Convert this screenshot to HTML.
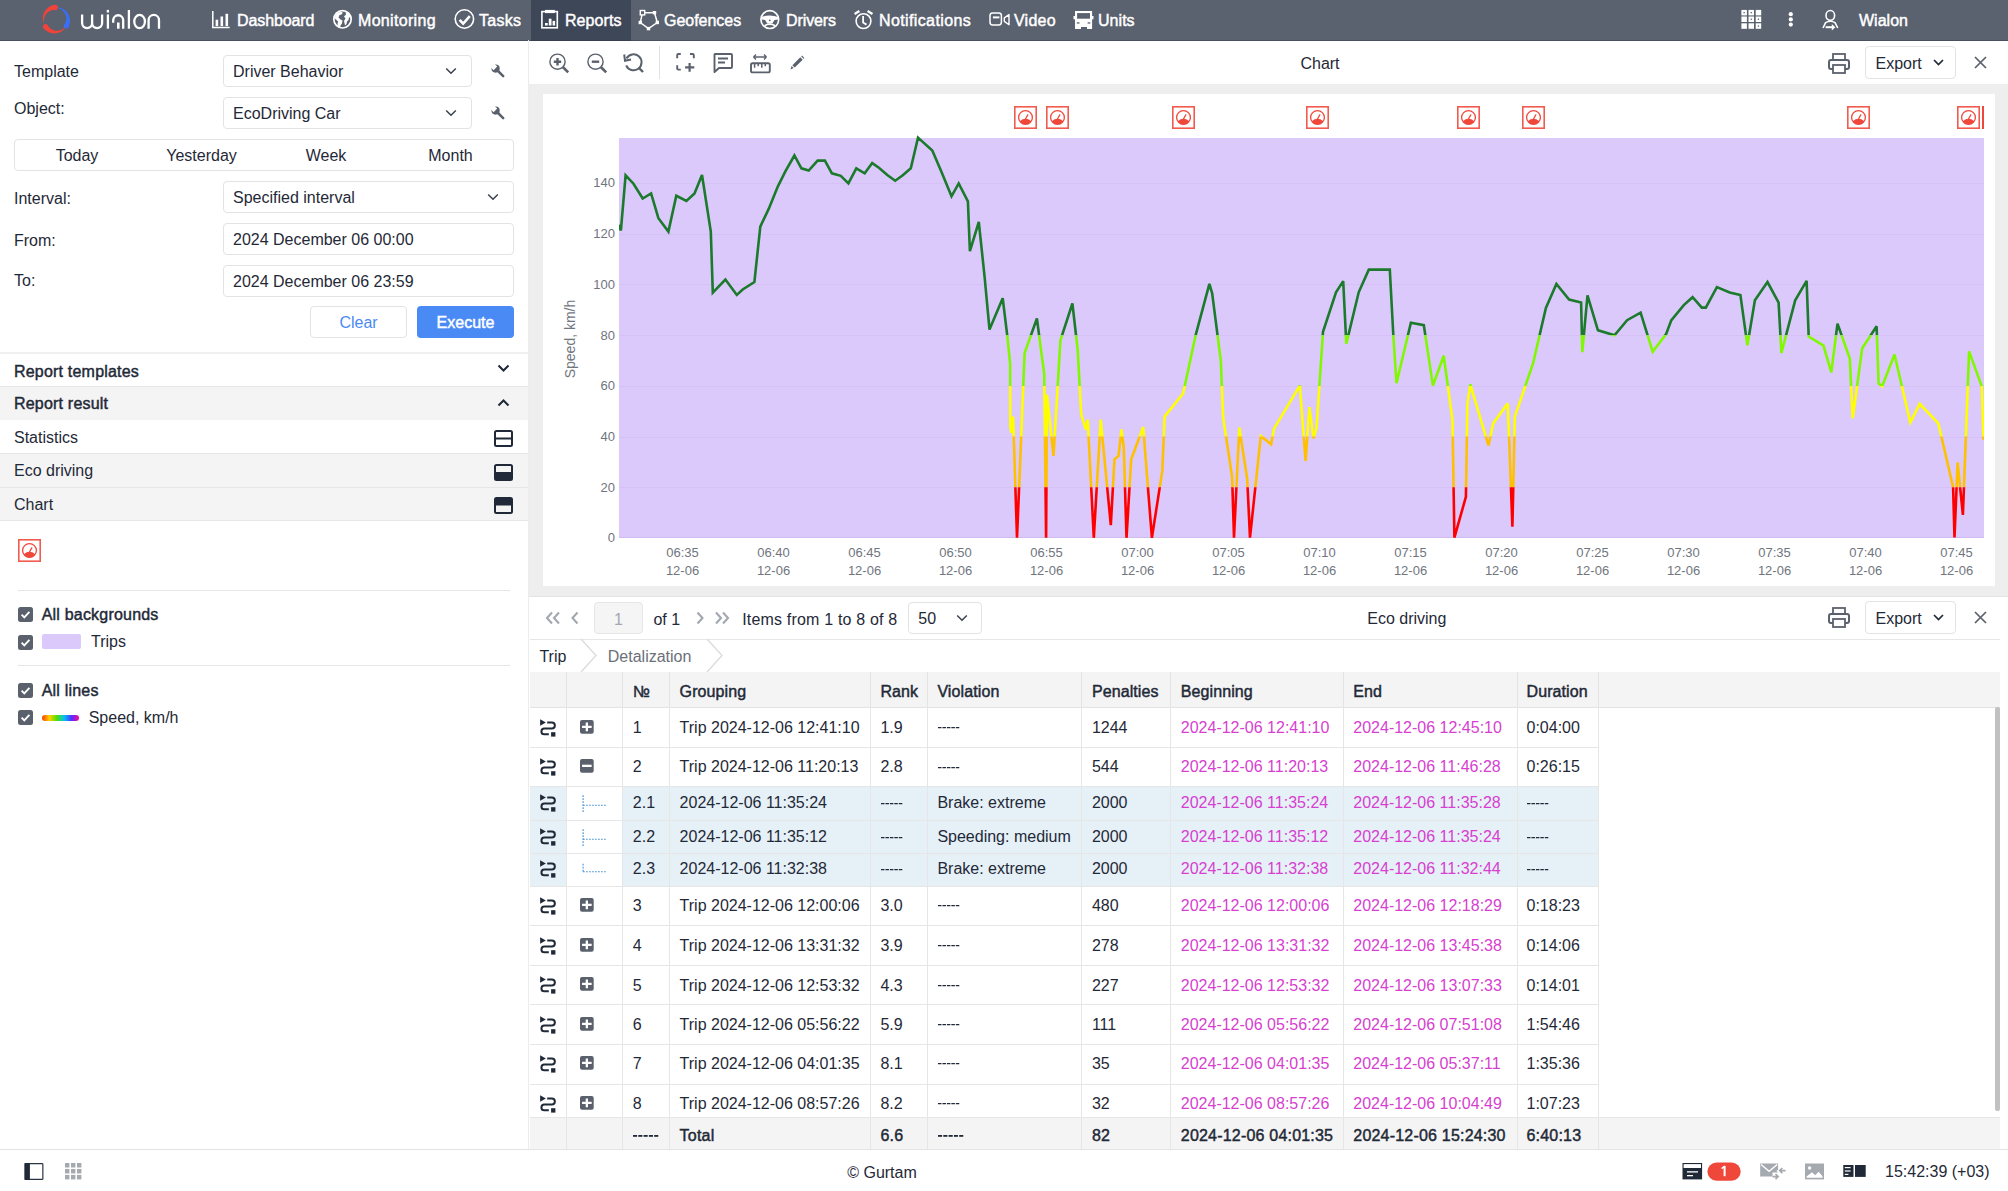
<!DOCTYPE html>
<html><head><meta charset="utf-8"><title>Wialon Reports</title>
<style>
html,body{margin:0;padding:0;}
body{width:2008px;height:1191px;position:relative;overflow:hidden;background:#fff;font-family:"Liberation Sans",sans-serif;}
.t{position:absolute;white-space:nowrap;}
.r{position:absolute;box-sizing:border-box;}
svg.r{overflow:visible;}
</style></head><body>

<div class="r" style="left:0px;top:0px;width:2008px;height:41px;background:#5a616f;"></div>
<div class="r" style="left:531px;top:0px;width:100px;height:41px;background:#3e4758;"></div>
<div class="r" style="left:0px;top:40px;width:2008px;height:1px;background:rgba(40,48,62,0.35);"></div>
<svg class="r" style="left:40px;top:4px;" width="32" height="32" viewBox="0 0 32 32"><path d="M15.18 0.81 L14.54 0.90 L13.90 1.03 L13.27 1.18 L12.65 1.36 L12.04 1.56 L11.45 1.79 L10.86 2.04 L10.29 2.32 L9.74 2.62 L9.20 2.95 L8.68 3.29 L8.18 3.66 L7.69 4.05 L7.23 4.46 L6.78 4.88 L6.36 5.33 L5.96 5.78 L5.58 6.26 L5.22 6.75 L4.88 7.25 L4.57 7.76 L4.29 8.29 L4.03 8.82 L3.79 9.37 L3.58 9.92 L3.39 10.47 L3.23 11.04 L3.09 11.60 L2.98 12.17 L2.90 12.74 L2.84 13.32 L2.81 13.89 L2.80 14.46 L2.82 15.02 L2.86 15.59 L2.92 16.15 L3.01 16.70 L3.13 17.24 L3.26 17.78 L3.42 18.31 L3.91 18.21 L3.87 17.68 L3.86 17.15 L3.86 16.63 L3.89 16.11 L3.94 15.60 L4.02 15.09 L4.11 14.58 L4.23 14.09 L4.37 13.60 L4.53 13.12 L4.71 12.65 L4.91 12.19 L5.13 11.75 L5.37 11.31 L5.62 10.89 L5.89 10.48 L6.18 10.09 L6.48 9.71 L6.80 9.35 L7.13 9.00 L7.48 8.68 L7.83 8.36 L8.20 8.07 L8.58 7.79 L8.97 7.54 L9.37 7.30 L9.77 7.08 L10.19 6.88 L10.61 6.70 L11.03 6.53 L11.46 6.39 L11.89 6.27 L12.32 6.17 L12.76 6.09 L13.20 6.02 L13.63 5.98 L14.07 5.96 L14.50 5.96 L14.93 5.97 L15.36 6.01Z" fill="#f0443a"/><circle cx="15.27" cy="3.41" r="2.60" fill="#f0443a"/><path d="M3.35 24.03 L3.79 24.56 L4.26 25.06 L4.75 25.54 L5.26 26.00 L5.79 26.43 L6.33 26.83 L6.89 27.20 L7.46 27.55 L8.05 27.87 L8.65 28.16 L9.26 28.42 L9.88 28.65 L10.51 28.85 L11.14 29.02 L11.78 29.16 L12.42 29.27 L13.06 29.35 L13.70 29.40 L14.34 29.42 L14.98 29.41 L15.62 29.37 L16.25 29.30 L16.87 29.20 L17.48 29.07 L18.09 28.92 L18.69 28.73 L19.27 28.53 L19.84 28.29 L20.40 28.03 L20.94 27.75 L21.46 27.44 L21.97 27.11 L22.46 26.76 L22.93 26.38 L23.38 25.99 L23.82 25.58 L24.22 25.15 L24.61 24.70 L24.97 24.24 L25.31 23.77 L24.93 23.45 L24.52 23.82 L24.09 24.18 L23.65 24.52 L23.20 24.83 L22.73 25.12 L22.26 25.39 L21.77 25.63 L21.28 25.85 L20.78 26.04 L20.27 26.21 L19.76 26.36 L19.24 26.48 L18.73 26.57 L18.21 26.64 L17.69 26.69 L17.17 26.71 L16.65 26.71 L16.14 26.68 L15.63 26.63 L15.13 26.56 L14.64 26.46 L14.15 26.34 L13.67 26.20 L13.20 26.04 L12.74 25.86 L12.29 25.66 L11.86 25.43 L11.43 25.19 L11.03 24.93 L10.63 24.65 L10.26 24.36 L9.90 24.05 L9.55 23.73 L9.22 23.39 L8.92 23.04 L8.63 22.68 L8.35 22.30 L8.10 21.92 L7.87 21.53 L7.66 21.12Z" fill="#f0443a"/><circle cx="5.50" cy="22.58" r="2.60" fill="#f0443a"/><path d="M28.39 23.32 L28.69 22.67 L28.96 22.01 L29.20 21.34 L29.40 20.66 L29.58 19.98 L29.71 19.28 L29.81 18.59 L29.88 17.90 L29.91 17.20 L29.91 16.51 L29.88 15.82 L29.81 15.13 L29.71 14.46 L29.58 13.79 L29.42 13.13 L29.22 12.48 L29.00 11.84 L28.74 11.22 L28.46 10.62 L28.14 10.03 L27.80 9.46 L27.44 8.91 L27.05 8.38 L26.64 7.87 L26.20 7.39 L25.74 6.92 L25.27 6.49 L24.77 6.08 L24.26 5.69 L23.73 5.33 L23.18 5.00 L22.63 4.70 L22.06 4.43 L21.48 4.18 L20.89 3.97 L20.30 3.78 L19.70 3.63 L19.09 3.50 L18.49 3.41 L17.88 3.34 L17.79 3.83 L18.35 4.00 L18.90 4.20 L19.44 4.42 L19.96 4.67 L20.46 4.94 L20.95 5.23 L21.43 5.55 L21.88 5.88 L22.32 6.24 L22.73 6.62 L23.13 7.01 L23.50 7.42 L23.85 7.85 L24.18 8.29 L24.49 8.74 L24.77 9.21 L25.02 9.69 L25.25 10.17 L25.46 10.67 L25.64 11.17 L25.80 11.68 L25.93 12.19 L26.03 12.70 L26.11 13.22 L26.16 13.74 L26.19 14.25 L26.19 14.77 L26.17 15.28 L26.12 15.79 L26.05 16.29 L25.95 16.78 L25.83 17.27 L25.69 17.75 L25.52 18.21 L25.33 18.67 L25.13 19.11 L24.90 19.54 L24.65 19.96 L24.38 20.36 L24.10 20.75Z" fill="#3a6ff5"/><circle cx="26.24" cy="22.03" r="2.50" fill="#3a6ff5"/></svg>
<svg class="r" style="left:80px;top:10.2px;" width="82" height="20" viewBox="0 0 82 20"><g fill="none" stroke="#ffffff" stroke-width="2.3"><path d="M2.1 4.4 V13.1 A5 5 0 0 0 12.1 13.1 V4.4 M12.1 13.1 A5 5 0 0 0 22.1 13.1 V4.4"/><path d="M27.9 4.4 V18.7"/><path d="M33.2 12.8 V10.25 A5 5 0 0 1 43.2 10.25 V18.7"/><path d="M48.9 0 V18.7"/><ellipse cx="59.6" cy="11.55" rx="5.35" ry="6.6"/><path d="M68.6 18.7 V10.15 A5.2 5.2 0 0 1 79 10.15 V18.7"/></g><rect x="26.75" y="-0.1" width="2.3" height="2.6" fill="#ffffff"/><rect x="37" y="12.5" width="2.6" height="6.2" fill="#ffffff"/></svg>
<svg class="r" style="left:0px;top:0px;" width="2008" height="41" viewBox="0 0 2008 41"><g fill="none" stroke="#ffffff"><path d="M212.8 11 V27.6 H229.7" stroke-width="1.5"/></g><rect x="215.6" y="19.7" width="2.6" height="6.4" fill="#ffffff"/><rect x="220.5" y="16.5" width="2.6" height="9.6" fill="#ffffff"/><rect x="225.5" y="13.8" width="2.6" height="12.3" fill="#ffffff"/><circle cx="342.5" cy="19.3" r="8.7" fill="none" stroke="#ffffff" stroke-width="1.7"/><path d="M337.5 12.8 Q340.5 11.5 343 12.5 L341.5 14.5 L339.5 15 L338.5 17.5 L340.5 19.5 L342.5 20.5 L342 23.5 L340.5 25.5 L340 27.5 Q337.5 26.5 337.5 24.5 L338 21.5 L336 19.5 L334.5 18.5 Q335 14.5 337.5 12.8 Z" fill="#ffffff"/><path d="M345.5 11.8 Q349.5 13 350.8 17 L349 17.5 L348.5 20 L347 21.5 L346.5 24 L345 25.5 Q344.5 22.5 344 21 L345.5 18.5 L344 16.5 L346 14.5 Z" fill="#ffffff"/><circle cx="464.4" cy="19" r="9.2" fill="none" stroke="#ffffff" stroke-width="1.6"/><path d="M459.6 19.8 L463.2 23.6 L469.8 16.2" fill="none" stroke="#ffffff" stroke-width="2.6"/><rect x="541.9" y="11.6" width="15.4" height="16.2" fill="none" stroke="#ffffff" stroke-width="1.6"/><rect x="545" y="9.9" width="9.8" height="3.2" fill="#ffffff"/><rect x="545" y="23" width="2.7" height="2.5" fill="#ffffff"/><rect x="548.8" y="18.7" width="2.7" height="6.8" fill="#ffffff"/><rect x="552.6" y="20.9" width="2.5" height="4.6" fill="#ffffff"/><path d="M642.5 12.7 L654.5 12.7 L657.3 22.5 L648.5 28.6 L640.3 22.5 Z" fill="none" stroke="#ffffff" stroke-width="1.5"/><rect x="640.3" y="10.5" width="4.4" height="4.4" fill="#5a616f" stroke="#ffffff" stroke-width="1.4"/><rect x="652.8" y="11" width="3.4" height="3.4" fill="#ffffff"/><rect x="655.6" y="20.8" width="3.4" height="3.4" fill="#ffffff"/><rect x="646.8" y="26.9" width="3.4" height="3.4" fill="#ffffff"/><rect x="638.6" y="20.8" width="3.4" height="3.4" fill="#ffffff"/><circle cx="769.8" cy="19.6" r="8.9" fill="none" stroke="#ffffff" stroke-width="1.7"/><path d="M761.2 17 Q769.8 14 778.4 17 L778.4 19.5 L774.5 20 L772.3 23.5 L767.3 23.5 L765.1 20 L761.2 19.5 Z" fill="#ffffff"/><circle cx="769.8" cy="20.3" r="0.9" fill="#5a616f"/><path d="M764.5 25.8 Q769.8 22.6 775.1 25.8" fill="none" stroke="#ffffff" stroke-width="1.7"/><circle cx="863.5" cy="21.1" r="7.4" fill="none" stroke="#ffffff" stroke-width="1.6"/><path d="M854.6 14 L859.4 11 M867.6 11 L872.5 14" fill="none" stroke="#ffffff" stroke-width="2.2"/><path d="M863.1 16 V22.6 L866.5 24.6" fill="none" stroke="#ffffff" stroke-width="1.8"/><rect x="990" y="12.9" width="11.4" height="12" rx="2.6" fill="none" stroke="#ffffff" stroke-width="1.5"/><rect x="992.9" y="16.4" width="6.5" height="2" fill="#ffffff"/><path d="M1004.3 17.8 L1009 14.6 V24.7 L1004.3 21.4 Z" fill="none" stroke="#ffffff" stroke-width="1.4" stroke-linejoin="round"/><path d="M1075 11 H1092.1 V28.9 H1087 V27.1 H1081 V28.9 H1075 Z" fill="#ffffff"/><rect x="1077.1" y="13.1" width="12.9" height="5.6" fill="#5a616f"/><rect x="1073.5" y="16" width="1.6" height="3.3" fill="#ffffff"/><rect x="1092" y="16" width="1.5" height="3.3" fill="#ffffff"/><rect x="1076.8" y="22.3" width="2.7" height="1.3" fill="#5a616f"/><rect x="1087.6" y="22.3" width="2.7" height="1.3" fill="#5a616f"/><rect x="1741.4" y="9.9" width="5.5" height="5.5" fill="#ffffff"/><rect x="1743.5" y="12.0" width="1.3" height="1.3" fill="#5a616f"/><rect x="1741.4" y="16.5" width="5.5" height="5.5" fill="#ffffff"/><rect x="1741.4" y="23.3" width="5.5" height="5.5" fill="#ffffff"/><rect x="1748.5" y="9.9" width="5.5" height="5.5" fill="#ffffff"/><rect x="1750.6" y="12.0" width="1.3" height="1.3" fill="#5a616f"/><rect x="1748.5" y="16.5" width="5.5" height="5.5" fill="#ffffff"/><rect x="1750.6" y="18.6" width="1.3" height="1.3" fill="#5a616f"/><rect x="1748.5" y="23.3" width="5.5" height="5.5" fill="#ffffff"/><rect x="1755.7" y="9.9" width="5.5" height="5.5" fill="#ffffff"/><rect x="1755.7" y="16.5" width="5.5" height="5.5" fill="#ffffff"/><rect x="1757.8" y="18.6" width="1.3" height="1.3" fill="#5a616f"/><rect x="1755.7" y="23.3" width="5.5" height="5.5" fill="#ffffff"/><rect x="1757.8" y="25.400000000000002" width="1.3" height="1.3" fill="#5a616f"/><circle cx="1790.8" cy="14.2" r="2.1" fill="#ffffff"/><circle cx="1790.8" cy="19.4" r="2.1" fill="#ffffff"/><circle cx="1790.8" cy="24.6" r="2.1" fill="#ffffff"/><ellipse cx="1830.3" cy="15.4" rx="4.3" ry="4.9" fill="none" stroke="#ffffff" stroke-width="1.6"/><path d="M1823 28 L1825.6 22.6 Q1830.3 19.8 1835 22.6 L1837.8 28" fill="none" stroke="#ffffff" stroke-width="1.6"/><path d="M1825.6 27.2 H1832.5" stroke="#ffffff" stroke-width="2"/><path d="M1831.8 23.9 L1835.4 27.2 L1831.8 30.5 Z" fill="#ffffff"/></svg>
<div class="t" style="top:11.0px;font-size:16px;line-height:20px;color:#ffffff;left:237.0px;-webkit-text-stroke:0.45px #fff;letter-spacing:-0.1px;">Dashboard</div>
<div class="t" style="top:11.0px;font-size:16px;line-height:20px;color:#ffffff;left:358.0px;-webkit-text-stroke:0.45px #fff;letter-spacing:0.32px;">Monitoring</div>
<div class="t" style="top:11.0px;font-size:16px;line-height:20px;color:#ffffff;left:479.0px;-webkit-text-stroke:0.45px #fff;letter-spacing:0.3px;">Tasks</div>
<div class="t" style="top:11.0px;font-size:16px;line-height:20px;color:#ffffff;left:565.0px;-webkit-text-stroke:0.45px #fff;letter-spacing:0.07px;">Reports</div>
<div class="t" style="top:11.0px;font-size:16px;line-height:20px;color:#ffffff;left:664.0px;-webkit-text-stroke:0.45px #fff;letter-spacing:-0.02px;">Geofences</div>
<div class="t" style="top:11.0px;font-size:16px;line-height:20px;color:#ffffff;left:786.0px;-webkit-text-stroke:0.45px #fff;letter-spacing:-0.1px;">Drivers</div>
<div class="t" style="top:11.0px;font-size:16px;line-height:20px;color:#ffffff;left:879.0px;-webkit-text-stroke:0.45px #fff;letter-spacing:0.38px;">Notifications</div>
<div class="t" style="top:11.0px;font-size:16px;line-height:20px;color:#ffffff;left:1014.0px;-webkit-text-stroke:0.45px #fff;letter-spacing:0.24px;">Video</div>
<div class="t" style="top:11.0px;font-size:16px;line-height:20px;color:#ffffff;left:1098.0px;-webkit-text-stroke:0.45px #fff;letter-spacing:0.04px;">Units</div>
<div class="t" style="top:11.0px;font-size:16px;line-height:20px;color:#ffffff;left:1859.0px;-webkit-text-stroke:0.45px #fff;letter-spacing:0.02px;">Wialon</div>
<div class="r" style="left:528px;top:40px;width:1.3px;height:1110px;background:#ececec;"></div>
<div class="t" style="top:62.3px;font-size:16px;line-height:20px;color:#1f2937;left:14.0px;">Template</div>
<div class="r" style="left:223px;top:55px;width:249px;height:32px;border:1px solid #e3e3e3;border-radius:4px;background:#fff;"></div>
<div class="t" style="top:62.0px;font-size:16px;line-height:20px;color:#1f2937;left:233.0px;">Driver Behavior</div>
<svg class="r" style="left:445px;top:67.0px;" width="12" height="8" viewBox="0 0 12 8"><path d="M1.2 1.5 L6 6.2 L10.8 1.5" fill="none" stroke="#39414e" stroke-width="1.5"/></svg>
<div class="t" style="top:99.2px;font-size:16px;line-height:20px;color:#1f2937;left:14.0px;">Object:</div>
<div class="r" style="left:223px;top:97px;width:249px;height:32px;border:1px solid #e3e3e3;border-radius:4px;background:#fff;"></div>
<div class="t" style="top:104.0px;font-size:16px;line-height:20px;color:#1f2937;left:233.0px;">EcoDriving Car</div>
<svg class="r" style="left:445px;top:109.0px;" width="12" height="8" viewBox="0 0 12 8"><path d="M1.2 1.5 L6 6.2 L10.8 1.5" fill="none" stroke="#39414e" stroke-width="1.5"/></svg>
<svg class="r" style="left:490.5px;top:64px;" width="15" height="15" viewBox="0 0 15 15"><path d="M5 5 L12.2 12.2" stroke="#5b616c" stroke-width="2.5" stroke-linecap="round"/><circle cx="4.6" cy="4.6" r="4.1" fill="#5b616c"/><path d="M-1 2.6 L2.6 -1 L6.2 2.6 L2.6 6.2 Z" fill="#fff"/></svg>
<svg class="r" style="left:490.5px;top:106px;" width="15" height="15" viewBox="0 0 15 15"><path d="M5 5 L12.2 12.2" stroke="#5b616c" stroke-width="2.5" stroke-linecap="round"/><circle cx="4.6" cy="4.6" r="4.1" fill="#5b616c"/><path d="M-1 2.6 L2.6 -1 L6.2 2.6 L2.6 6.2 Z" fill="#fff"/></svg>
<div class="r" style="left:14px;top:139px;width:500px;height:32px;border:1px solid #e3e3e3;border-radius:4px;"></div>
<div class="t" style="top:146.2px;font-size:16px;line-height:20px;color:#1f2937;left:-223.0px;width:600px;text-align:center;">Today</div>
<div class="t" style="top:146.2px;font-size:16px;line-height:20px;color:#1f2937;left:-98.5px;width:600px;text-align:center;">Yesterday</div>
<div class="t" style="top:146.2px;font-size:16px;line-height:20px;color:#1f2937;left:26.0px;width:600px;text-align:center;">Week</div>
<div class="t" style="top:146.2px;font-size:16px;line-height:20px;color:#1f2937;left:150.5px;width:600px;text-align:center;">Month</div>
<div class="t" style="top:188.5px;font-size:16px;line-height:20px;color:#1f2937;left:14.0px;">Interval:</div>
<div class="r" style="left:223px;top:181px;width:291px;height:32px;border:1px solid #e3e3e3;border-radius:4px;background:#fff;"></div>
<div class="t" style="top:188.0px;font-size:16px;line-height:20px;color:#1f2937;left:233.0px;">Specified interval</div>
<svg class="r" style="left:487px;top:193.0px;" width="12" height="8" viewBox="0 0 12 8"><path d="M1.2 1.5 L6 6.2 L10.8 1.5" fill="none" stroke="#39414e" stroke-width="1.5"/></svg>
<div class="t" style="top:230.6px;font-size:16px;line-height:20px;color:#1f2937;left:14.0px;">From:</div>
<div class="r" style="left:223px;top:223px;width:291px;height:32px;border:1px solid #e3e3e3;border-radius:4px;background:#fff;"></div>
<div class="t" style="top:230.0px;font-size:16px;line-height:20px;color:#1f2937;left:233.0px;">2024 December 06 00:00</div>
<div class="t" style="top:270.8px;font-size:16px;line-height:20px;color:#1f2937;left:14.0px;">To:</div>
<div class="r" style="left:223px;top:265px;width:291px;height:32px;border:1px solid #e3e3e3;border-radius:4px;background:#fff;"></div>
<div class="t" style="top:272.0px;font-size:16px;line-height:20px;color:#1f2937;left:233.0px;">2024 December 06 23:59</div>
<div class="r" style="left:310px;top:306px;width:97px;height:32px;border:1px solid #e3e3e3;border-radius:4px;"></div>
<div class="t" style="top:313.3px;font-size:16px;line-height:20px;color:#4a8af4;left:58.5px;width:600px;text-align:center;">Clear</div>
<div class="r" style="left:417px;top:306px;width:97px;height:32px;background:#4a8af4;border-radius:4px;"></div>
<div class="t" style="top:313.3px;font-size:16px;line-height:20px;color:#fff;left:165.5px;width:600px;text-align:center;-webkit-text-stroke:0.45px #fff;">Execute</div>
<div class="r" style="left:0px;top:352px;width:528px;height:2px;background:#f0f0f0;"></div>
<div class="t" style="top:361.6px;font-size:16px;line-height:20px;color:#1f2937;left:14.0px;-webkit-text-stroke:0.45px #1f2937;letter-spacing:0.2px;">Report templates</div>
<svg class="r" style="left:497px;top:364px;" width="13" height="8" viewBox="0 0 13 8"><path d="M1.5 1.5 L6.5 6.5 L11.5 1.5" fill="none" stroke="#1f2937" stroke-width="2"/></svg>
<div class="r" style="left:0px;top:386px;width:528px;height:1px;background:#e6e6e6;"></div>
<div class="r" style="left:0px;top:387px;width:528px;height:33px;background:#f4f4f4;"></div>
<div class="t" style="top:394.1px;font-size:16px;line-height:20px;color:#1f2937;left:14.0px;-webkit-text-stroke:0.45px #1f2937;letter-spacing:0.2px;">Report result</div>
<svg class="r" style="left:497px;top:399px;" width="13" height="8" viewBox="0 0 13 8"><path d="M1.5 6.5 L6.5 1.5 L11.5 6.5" fill="none" stroke="#1f2937" stroke-width="2"/></svg>
<div class="t" style="top:428.4px;font-size:16px;line-height:20px;color:#1f2937;left:14.0px;">Statistics</div>
<div class="r" style="left:0px;top:453px;width:528px;height:1px;background:#e6e6e6;"></div>
<div class="r" style="left:0px;top:454px;width:528px;height:33px;background:#f4f4f4;"></div>
<div class="t" style="top:461.0px;font-size:16px;line-height:20px;color:#1f2937;left:14.0px;">Eco driving</div>
<div class="r" style="left:0px;top:487px;width:528px;height:1px;background:#e6e6e6;"></div>
<div class="r" style="left:0px;top:488px;width:528px;height:32px;background:#f4f4f4;"></div>
<div class="t" style="top:495.0px;font-size:16px;line-height:20px;color:#1f2937;left:14.0px;">Chart</div>
<div class="r" style="left:0px;top:520px;width:528px;height:1px;background:#e6e6e6;"></div>
<svg class="r" style="left:494px;top:430px;" width="19" height="17" viewBox="0 0 19 17"><rect x="1" y="1" width="17" height="15" rx="1.5" fill="none" stroke="#1f2937" stroke-width="2"/><path d="M1 8.5 H18" stroke="#1f2937" stroke-width="2"/></svg>
<svg class="r" style="left:494px;top:464px;" width="19" height="17" viewBox="0 0 19 17"><rect x="1" y="1" width="17" height="15" rx="1.5" fill="none" stroke="#1f2937" stroke-width="2"/><rect x="1" y="8" width="17" height="8" fill="#1f2937"/></svg>
<svg class="r" style="left:494px;top:497px;" width="19" height="17" viewBox="0 0 19 17"><rect x="1" y="1" width="17" height="15" rx="1.5" fill="none" stroke="#1f2937" stroke-width="2"/><rect x="1" y="1" width="17" height="7.5" fill="#1f2937"/></svg>
<svg class="r" style="left:18px;top:539px;" width="23" height="23" viewBox="0 0 23 23"><rect x="0.8" y="0.8" width="21.4" height="21.4" fill="#fff" stroke="#f25a4e" stroke-width="1.6"/><circle cx="11.5" cy="11.5" r="6.9" fill="none" stroke="#f0473b" stroke-width="1.3"/><path d="M5.7 15.2 Q11.5 10.3 17.3 15.2 A6.9 6.9 0 0 1 5.7 15.2 Z" fill="#f0473b"/><path d="M11.5 13.0 L13.8 8.9" stroke="#f0473b" stroke-width="1.3" stroke-linecap="round"/></svg>
<div class="r" style="left:18px;top:589.5px;width:492px;height:1.2px;background:#e6e6e6;"></div>
<svg class="r" style="left:18px;top:607px;" width="15" height="15" viewBox="0 0 15 15"><rect x="0" y="0" width="15" height="15" rx="2.5" fill="#5b616c"/><path d="M3.6 7.6 L6.3 10.3 L11.4 4.8" fill="none" stroke="#fff" stroke-width="1.9"/></svg>
<div class="t" style="top:605.3px;font-size:16px;line-height:20px;color:#1f2937;left:41.7px;-webkit-text-stroke:0.45px #1f2937;letter-spacing:0.2px;">All backgrounds</div>
<svg class="r" style="left:18px;top:635px;" width="15" height="15" viewBox="0 0 15 15"><rect x="0" y="0" width="15" height="15" rx="2.5" fill="#5b616c"/><path d="M3.6 7.6 L6.3 10.3 L11.4 4.8" fill="none" stroke="#fff" stroke-width="1.9"/></svg>
<div class="r" style="left:42px;top:634px;width:39px;height:15px;background:#dcc9fc;border-radius:2px;"></div>
<div class="t" style="top:632.2px;font-size:16px;line-height:20px;color:#1f2937;left:91.0px;">Trips</div>
<div class="r" style="left:18px;top:665px;width:492px;height:1.2px;background:#e6e6e6;"></div>
<svg class="r" style="left:18px;top:683px;" width="15" height="15" viewBox="0 0 15 15"><rect x="0" y="0" width="15" height="15" rx="2.5" fill="#5b616c"/><path d="M3.6 7.6 L6.3 10.3 L11.4 4.8" fill="none" stroke="#fff" stroke-width="1.9"/></svg>
<div class="t" style="top:681.2px;font-size:16px;line-height:20px;color:#1f2937;left:41.7px;-webkit-text-stroke:0.45px #1f2937;letter-spacing:0.2px;">All lines</div>
<svg class="r" style="left:18px;top:710px;" width="15" height="15" viewBox="0 0 15 15"><rect x="0" y="0" width="15" height="15" rx="2.5" fill="#5b616c"/><path d="M3.6 7.6 L6.3 10.3 L11.4 4.8" fill="none" stroke="#fff" stroke-width="1.9"/></svg>
<div class="r" style="left:42px;top:715px;width:37px;height:6px;background:linear-gradient(90deg,#ff3b00,#ffd000 20%,#50e000 40%,#00c0ff 60%,#5030ff 80%,#ff00a0);border-radius:3px;"></div>
<div class="t" style="top:708.2px;font-size:16px;line-height:20px;color:#1f2937;left:88.7px;">Speed, km/h</div>
<div class="r" style="left:529.3px;top:84px;width:1478.7px;height:513px;background:#eeeeee;"></div>
<svg class="r" style="left:548px;top:53px;" width="22" height="22" viewBox="0 0 22 22"><circle cx="9.5" cy="8.7" r="7.6" fill="none" stroke="#5b616c" stroke-width="1.4"/><path d="M14.8 14 L20.2 19.4" stroke="#5b616c" stroke-width="2.6"/><path d="M9.5 5 V12.4 M5.8 8.7 H13.2" stroke="#5b616c" stroke-width="2.4"/></svg>
<svg class="r" style="left:586px;top:53px;" width="22" height="22" viewBox="0 0 22 22"><circle cx="9.5" cy="8.7" r="7.6" fill="none" stroke="#5b616c" stroke-width="1.4"/><path d="M14.8 14 L20.2 19.4" stroke="#5b616c" stroke-width="2.6"/><path d="M5.8 8.7 H13.2" stroke="#5b616c" stroke-width="2.4"/></svg>
<svg class="r" style="left:623px;top:52px;" width="22" height="22" viewBox="0 0 22 22"><path d="M3.5 6.5 A8 8 0 1 1 3.2 13.5" fill="none" stroke="#5b616c" stroke-width="2"/><path d="M1.2 2.5 L2 8.8 L8 7.5" fill="none" stroke="#5b616c" stroke-width="2"/><path d="M15.5 15.5 L20 20" stroke="#5b616c" stroke-width="2.4"/></svg>
<div class="r" style="left:659px;top:46px;width:1px;height:33px;background:#e2e2e2;"></div>
<svg class="r" style="left:675px;top:52px;" width="22" height="21" viewBox="0 0 22 21"><path d="M2.2 6.2 V3.2 Q2.2 2 3.4 2 H5.8 M15 2 H17.6 Q18.8 2 18.8 3.2 V6.2 M2.2 13.2 V16.4 Q2.2 17.6 3.4 17.6 H5.8" fill="none" stroke="#5b616c" stroke-width="1.9"/><path d="M14.6 10.9 V19.8 M10.1 15.3 H19.3" stroke="#5b616c" stroke-width="2.2"/></svg>
<svg class="r" style="left:713px;top:53px;" width="20" height="20" viewBox="0 0 20 20"><path d="M2 1 H18 Q19 1 19 2 V14 Q19 15 18 15 H6 L1.5 19 V2 Q1.5 1 2 1 Z" fill="none" stroke="#5b616c" stroke-width="1.9" stroke-linejoin="round"/><path d="M5 5.5 H15 M5 9.5 H12" stroke="#5b616c" stroke-width="1.8"/></svg>
<svg class="r" style="left:749px;top:52px;" width="22" height="21" viewBox="0 0 22 21"><path d="M4.5 5 H17.5 M4.5 5 L7 2.5 M4.5 5 L7 7.5 M17.5 5 L15 2.5 M17.5 5 L15 7.5" fill="none" stroke="#5b616c" stroke-width="1.4"/><rect x="2" y="11.2" width="18.8" height="9.2" rx="1.6" fill="none" stroke="#5b616c" stroke-width="1.9"/><path d="M5.6 11.2 V15.8 M9.2 11.2 V14.2 M12.8 11.2 V15.8 M16.3 11.2 V14.2" stroke="#5b616c" stroke-width="1.5"/></svg>
<svg class="r" style="left:790px;top:55px;" width="15" height="15" viewBox="0 0 15 15"><path d="M0.5 14.6 L1.6 10.9 L3.7 13 Z" fill="#5b616c"/><path d="M2.4 10.2 L10.3 2.3 L12.7 4.7 L4.8 12.6 Z" fill="#5b616c"/><path d="M11.2 1.4 L12 0.6 L14.4 3 L13.6 3.8 Z" fill="#5b616c"/></svg>
<div class="t" style="top:54.0px;font-size:16px;line-height:20px;color:#1f2937;left:1020.0px;width:600px;text-align:center;">Chart</div>
<svg class="r" style="left:1828px;top:53px;" width="22" height="21" viewBox="0 0 22 21"><rect x="5" y="1" width="12" height="6" fill="none" stroke="#5b616c" stroke-width="1.8"/><rect x="1" y="7" width="20" height="9" rx="2" fill="none" stroke="#5b616c" stroke-width="2"/><rect x="5" y="12" width="12" height="8" fill="#fff" stroke="#5b616c" stroke-width="1.8"/></svg>
<div class="r" style="left:1865px;top:46px;width:91px;height:33px;border:1px solid #e3e3e3;border-radius:4px;background:#fff;"></div>
<div class="t" style="top:54.0px;font-size:16px;line-height:20px;color:#1f2937;left:1875.5px;">Export</div>
<svg class="r" style="left:1933px;top:59px;" width="11" height="7" viewBox="0 0 11 7"><path d="M1 1 L5.5 5.5 L10 1" fill="none" stroke="#1f2937" stroke-width="1.7"/></svg>
<svg class="r" style="left:1974px;top:56px;" width="13" height="13" viewBox="0 0 13 13"><path d="M1 1 L12 12 M12 1 L1 12" stroke="#5b616c" stroke-width="1.7"/></svg>
<div class="r" style="left:543px;top:94px;width:1452px;height:492px;background:#fff;"></div>
<div class="r" style="left:619px;top:138px;width:1364.5px;height:400px;background:#dcc9fc;"></div>
<div class="r" style="left:619px;top:487px;width:1364.5px;height:1px;background:#d5c1f5;"></div>
<div class="t" style="top:477.6px;font-size:13px;line-height:20px;color:#70757e;left:15.0px;width:600px;text-align:right;">20</div>
<div class="r" style="left:619px;top:437px;width:1364.5px;height:1px;background:#d5c1f5;"></div>
<div class="t" style="top:426.9px;font-size:13px;line-height:20px;color:#70757e;left:15.0px;width:600px;text-align:right;">40</div>
<div class="r" style="left:619px;top:386px;width:1364.5px;height:1px;background:#d5c1f5;"></div>
<div class="t" style="top:376.2px;font-size:13px;line-height:20px;color:#70757e;left:15.0px;width:600px;text-align:right;">60</div>
<div class="r" style="left:619px;top:335px;width:1364.5px;height:1px;background:#d5c1f5;"></div>
<div class="t" style="top:325.5px;font-size:13px;line-height:20px;color:#70757e;left:15.0px;width:600px;text-align:right;">80</div>
<div class="r" style="left:619px;top:284px;width:1364.5px;height:1px;background:#d5c1f5;"></div>
<div class="t" style="top:274.8px;font-size:13px;line-height:20px;color:#70757e;left:15.0px;width:600px;text-align:right;">100</div>
<div class="r" style="left:619px;top:234px;width:1364.5px;height:1px;background:#d5c1f5;"></div>
<div class="t" style="top:224.1px;font-size:13px;line-height:20px;color:#70757e;left:15.0px;width:600px;text-align:right;">120</div>
<div class="r" style="left:619px;top:183px;width:1364.5px;height:1px;background:#d5c1f5;"></div>
<div class="t" style="top:173.4px;font-size:13px;line-height:20px;color:#70757e;left:15.0px;width:600px;text-align:right;">140</div>
<div class="r" style="left:619px;top:537px;width:1364.5px;height:1.4px;background:#d0baf2;"></div>
<div class="t" style="top:528.3px;font-size:13px;line-height:20px;color:#70757e;left:15.0px;width:600px;text-align:right;">0</div>
<div class="t" style="top:329.0px;font-size:14px;line-height:20px;color:#70757e;left:269.5px;width:600px;text-align:center;transform:rotate(-90deg);">Speed, km/h</div>
<div class="t" style="top:543.0px;font-size:13px;line-height:20px;color:#70757e;left:382.5px;width:600px;text-align:center;">06:35</div>
<div class="t" style="top:561.0px;font-size:13px;line-height:20px;color:#70757e;left:382.5px;width:600px;text-align:center;">12-06</div>
<div class="t" style="top:543.0px;font-size:13px;line-height:20px;color:#70757e;left:473.5px;width:600px;text-align:center;">06:40</div>
<div class="t" style="top:561.0px;font-size:13px;line-height:20px;color:#70757e;left:473.5px;width:600px;text-align:center;">12-06</div>
<div class="t" style="top:543.0px;font-size:13px;line-height:20px;color:#70757e;left:564.5px;width:600px;text-align:center;">06:45</div>
<div class="t" style="top:561.0px;font-size:13px;line-height:20px;color:#70757e;left:564.5px;width:600px;text-align:center;">12-06</div>
<div class="t" style="top:543.0px;font-size:13px;line-height:20px;color:#70757e;left:655.5px;width:600px;text-align:center;">06:50</div>
<div class="t" style="top:561.0px;font-size:13px;line-height:20px;color:#70757e;left:655.5px;width:600px;text-align:center;">12-06</div>
<div class="t" style="top:543.0px;font-size:13px;line-height:20px;color:#70757e;left:746.5px;width:600px;text-align:center;">06:55</div>
<div class="t" style="top:561.0px;font-size:13px;line-height:20px;color:#70757e;left:746.5px;width:600px;text-align:center;">12-06</div>
<div class="t" style="top:543.0px;font-size:13px;line-height:20px;color:#70757e;left:837.5px;width:600px;text-align:center;">07:00</div>
<div class="t" style="top:561.0px;font-size:13px;line-height:20px;color:#70757e;left:837.5px;width:600px;text-align:center;">12-06</div>
<div class="t" style="top:543.0px;font-size:13px;line-height:20px;color:#70757e;left:928.5px;width:600px;text-align:center;">07:05</div>
<div class="t" style="top:561.0px;font-size:13px;line-height:20px;color:#70757e;left:928.5px;width:600px;text-align:center;">12-06</div>
<div class="t" style="top:543.0px;font-size:13px;line-height:20px;color:#70757e;left:1019.5px;width:600px;text-align:center;">07:10</div>
<div class="t" style="top:561.0px;font-size:13px;line-height:20px;color:#70757e;left:1019.5px;width:600px;text-align:center;">12-06</div>
<div class="t" style="top:543.0px;font-size:13px;line-height:20px;color:#70757e;left:1110.5px;width:600px;text-align:center;">07:15</div>
<div class="t" style="top:561.0px;font-size:13px;line-height:20px;color:#70757e;left:1110.5px;width:600px;text-align:center;">12-06</div>
<div class="t" style="top:543.0px;font-size:13px;line-height:20px;color:#70757e;left:1201.5px;width:600px;text-align:center;">07:20</div>
<div class="t" style="top:561.0px;font-size:13px;line-height:20px;color:#70757e;left:1201.5px;width:600px;text-align:center;">12-06</div>
<div class="t" style="top:543.0px;font-size:13px;line-height:20px;color:#70757e;left:1292.5px;width:600px;text-align:center;">07:25</div>
<div class="t" style="top:561.0px;font-size:13px;line-height:20px;color:#70757e;left:1292.5px;width:600px;text-align:center;">12-06</div>
<div class="t" style="top:543.0px;font-size:13px;line-height:20px;color:#70757e;left:1383.5px;width:600px;text-align:center;">07:30</div>
<div class="t" style="top:561.0px;font-size:13px;line-height:20px;color:#70757e;left:1383.5px;width:600px;text-align:center;">12-06</div>
<div class="t" style="top:543.0px;font-size:13px;line-height:20px;color:#70757e;left:1474.5px;width:600px;text-align:center;">07:35</div>
<div class="t" style="top:561.0px;font-size:13px;line-height:20px;color:#70757e;left:1474.5px;width:600px;text-align:center;">12-06</div>
<div class="t" style="top:543.0px;font-size:13px;line-height:20px;color:#70757e;left:1565.5px;width:600px;text-align:center;">07:40</div>
<div class="t" style="top:561.0px;font-size:13px;line-height:20px;color:#70757e;left:1565.5px;width:600px;text-align:center;">12-06</div>
<div class="t" style="top:543.0px;font-size:13px;line-height:20px;color:#70757e;left:1656.5px;width:600px;text-align:center;">07:45</div>
<div class="t" style="top:561.0px;font-size:13px;line-height:20px;color:#70757e;left:1656.5px;width:600px;text-align:center;">12-06</div>
<svg class="r" style="left:1014px;top:106px;" width="23" height="23" viewBox="0 0 23 23"><rect x="0.8" y="0.8" width="21.4" height="21.4" fill="#fff" stroke="#f25a4e" stroke-width="1.6"/><circle cx="11.5" cy="11.5" r="6.9" fill="none" stroke="#f0473b" stroke-width="1.3"/><path d="M5.7 15.2 Q11.5 10.3 17.3 15.2 A6.9 6.9 0 0 1 5.7 15.2 Z" fill="#f0473b"/><path d="M11.5 13.0 L13.8 8.9" stroke="#f0473b" stroke-width="1.3" stroke-linecap="round"/></svg>
<svg class="r" style="left:1046px;top:106px;" width="23" height="23" viewBox="0 0 23 23"><rect x="0.8" y="0.8" width="21.4" height="21.4" fill="#fff" stroke="#f25a4e" stroke-width="1.6"/><circle cx="11.5" cy="11.5" r="6.9" fill="none" stroke="#f0473b" stroke-width="1.3"/><path d="M5.7 15.2 Q11.5 10.3 17.3 15.2 A6.9 6.9 0 0 1 5.7 15.2 Z" fill="#f0473b"/><path d="M11.5 13.0 L13.8 8.9" stroke="#f0473b" stroke-width="1.3" stroke-linecap="round"/></svg>
<svg class="r" style="left:1172px;top:106px;" width="23" height="23" viewBox="0 0 23 23"><rect x="0.8" y="0.8" width="21.4" height="21.4" fill="#fff" stroke="#f25a4e" stroke-width="1.6"/><circle cx="11.5" cy="11.5" r="6.9" fill="none" stroke="#f0473b" stroke-width="1.3"/><path d="M5.7 15.2 Q11.5 10.3 17.3 15.2 A6.9 6.9 0 0 1 5.7 15.2 Z" fill="#f0473b"/><path d="M11.5 13.0 L13.8 8.9" stroke="#f0473b" stroke-width="1.3" stroke-linecap="round"/></svg>
<svg class="r" style="left:1306px;top:106px;" width="23" height="23" viewBox="0 0 23 23"><rect x="0.8" y="0.8" width="21.4" height="21.4" fill="#fff" stroke="#f25a4e" stroke-width="1.6"/><circle cx="11.5" cy="11.5" r="6.9" fill="none" stroke="#f0473b" stroke-width="1.3"/><path d="M5.7 15.2 Q11.5 10.3 17.3 15.2 A6.9 6.9 0 0 1 5.7 15.2 Z" fill="#f0473b"/><path d="M11.5 13.0 L13.8 8.9" stroke="#f0473b" stroke-width="1.3" stroke-linecap="round"/></svg>
<svg class="r" style="left:1457px;top:106px;" width="23" height="23" viewBox="0 0 23 23"><rect x="0.8" y="0.8" width="21.4" height="21.4" fill="#fff" stroke="#f25a4e" stroke-width="1.6"/><circle cx="11.5" cy="11.5" r="6.9" fill="none" stroke="#f0473b" stroke-width="1.3"/><path d="M5.7 15.2 Q11.5 10.3 17.3 15.2 A6.9 6.9 0 0 1 5.7 15.2 Z" fill="#f0473b"/><path d="M11.5 13.0 L13.8 8.9" stroke="#f0473b" stroke-width="1.3" stroke-linecap="round"/></svg>
<svg class="r" style="left:1522px;top:106px;" width="23" height="23" viewBox="0 0 23 23"><rect x="0.8" y="0.8" width="21.4" height="21.4" fill="#fff" stroke="#f25a4e" stroke-width="1.6"/><circle cx="11.5" cy="11.5" r="6.9" fill="none" stroke="#f0473b" stroke-width="1.3"/><path d="M5.7 15.2 Q11.5 10.3 17.3 15.2 A6.9 6.9 0 0 1 5.7 15.2 Z" fill="#f0473b"/><path d="M11.5 13.0 L13.8 8.9" stroke="#f0473b" stroke-width="1.3" stroke-linecap="round"/></svg>
<svg class="r" style="left:1847px;top:106px;" width="23" height="23" viewBox="0 0 23 23"><rect x="0.8" y="0.8" width="21.4" height="21.4" fill="#fff" stroke="#f25a4e" stroke-width="1.6"/><circle cx="11.5" cy="11.5" r="6.9" fill="none" stroke="#f0473b" stroke-width="1.3"/><path d="M5.7 15.2 Q11.5 10.3 17.3 15.2 A6.9 6.9 0 0 1 5.7 15.2 Z" fill="#f0473b"/><path d="M11.5 13.0 L13.8 8.9" stroke="#f0473b" stroke-width="1.3" stroke-linecap="round"/></svg>
<svg class="r" style="left:1957px;top:106px;" width="23" height="23" viewBox="0 0 23 23"><rect x="0.8" y="0.8" width="21.4" height="21.4" fill="#fff" stroke="#f25a4e" stroke-width="1.6"/><circle cx="11.5" cy="11.5" r="6.9" fill="none" stroke="#f0473b" stroke-width="1.3"/><path d="M5.7 15.2 Q11.5 10.3 17.3 15.2 A6.9 6.9 0 0 1 5.7 15.2 Z" fill="#f0473b"/><path d="M11.5 13.0 L13.8 8.9" stroke="#f0473b" stroke-width="1.3" stroke-linecap="round"/></svg>
<div class="r" style="left:1982px;top:106px;width:2px;height:23px;background:#f0473b;"></div>
<svg class="r" style="left:543px;top:94px;" width="1452" height="492" viewBox="0 0 1452 492"><defs><clipPath id="cb0"><rect x="0" y="-94" width="1452" height="335.2"/></clipPath><clipPath id="cb1"><rect x="0" y="241.2" width="1452" height="50.69999999999999"/></clipPath><clipPath id="cb2"><rect x="0" y="291.9" width="1452" height="50.700000000000045"/></clipPath><clipPath id="cb3"><rect x="0" y="342.6" width="1452" height="50.69999999999999"/></clipPath><clipPath id="cb4"><rect x="0" y="393.3" width="1452" height="112.69999999999999"/></clipPath><clipPath id="plotc"><rect x="76" y="0" width="1365" height="445"/></clipPath></defs><g clip-path="url(#plotc)"><polyline clip-path="url(#cb0)" points="75.7,130.9 77.9,136.4 82.6,81.3 90.5,89.7 99.7,104.5 108.1,99.5 115.4,124.2 125.4,137.6 133.3,101.8 143.4,107.0 151.5,99.5 159.0,81.0 167.8,137.6 169.8,198.6 182.4,185.5 193.8,200.9 199.7,195.5 211.4,188.0 217.3,132.6 225.7,114.9 234.9,92.3 242.5,77.1 251.4,61.5 258.4,74.3 265.7,76.6 274.6,66.6 281.9,66.6 288.9,79.3 297.8,81.8 305.4,89.4 313.3,74.3 321.7,79.3 329.2,69.1 335.9,73.8 344.3,81.0 352.2,86.7 359.8,81.3 367.8,74.3 375.0,43.6 389.3,56.5 398.1,77.1 408.5,102.3 415.7,89.4 424.9,107.4 426.9,157.2 435.8,128.0 441.7,183.8 446.5,235.6 459.7,204.2 464.3,241.8 467.1,269.5 467.3,333.0 468.5,338.8 470.1,322.6 474.0,443.8 476.3,389.6 481.6,259.1 493.9,224.5 501.2,279.9 503.1,443.8 504.0,300.7 510.5,361.9 517.4,246.4 529.4,209.5 534.7,255.7 538.2,320.3 542.8,335.3 544.7,325.6 550.8,443.8 557.7,325.6 567.8,431.1 571.5,365.3 575.5,361.9 578.5,335.3 580.8,353.8 583.5,443.8 588.2,365.3 600.2,333.0 608.9,443.8 619.3,376.9 621.6,322.6 640.1,299.5 652.8,240.6 666.4,189.9 669.2,199.5 677.8,266.5 680.2,324.0 689.1,382.6 691.0,443.6 696.3,333.5 704.2,385.0 707.0,443.6 717.8,341.9 728.1,350.3 731.0,334.7 756.8,291.6 762.6,367.0 766.4,313.2 770.5,344.3 773.6,333.5 780.0,237.8 793.0,198.3 800.2,187.1 803.3,249.8 815.7,198.3 825.8,175.6 846.8,175.6 850.4,242.6 853.5,289.2 867.9,228.7 880.8,231.1 889.9,291.6 900.7,261.7 909.5,326.3 911.4,443.6 922.9,402.9 924.4,309.6 927.3,290.4 945.5,351.5 950.2,329.4 964.6,309.6 966.3,347.9 969.4,432.8 971.8,322.7 990.2,268.9 1002.9,213.9 1013.4,189.9 1026.1,205.5 1038.1,208.6 1039.3,258.1 1044.5,201.4 1054.8,235.9 1055.1,236.3 1071.5,241.3 1084.1,226.2 1097.6,218.7 1109.7,257.7 1123.1,240.1 1128.2,226.5 1140.8,211.1 1149.6,203.2 1158.8,213.6 1162.8,213.6 1173.9,193.1 1186.7,198.5 1197.4,201.0 1204.4,251.4 1211.9,206.3 1224.5,188.1 1235.6,208.6 1238.4,259.0 1252.2,206.3 1263.6,186.8 1265.7,242.6 1280.5,251.7 1288.3,278.4 1294.5,229.6 1306.8,264.6 1309.7,324.2 1319.2,254.3 1333.6,232.3 1335.6,289.3 1339.1,292.4 1351.5,260.5 1367.3,328.4 1376.7,309.8 1395.3,329.4 1410.1,393.1 1411.5,443.5 1414.6,368.5 1419.9,420.9 1426.1,257.4 1438.8,292.4 1440.5,345.8" fill="none" stroke="#1b7a2b" stroke-width="2.6" stroke-linejoin="miter" stroke-miterlimit="3"/><polyline clip-path="url(#cb1)" points="75.7,130.9 77.9,136.4 82.6,81.3 90.5,89.7 99.7,104.5 108.1,99.5 115.4,124.2 125.4,137.6 133.3,101.8 143.4,107.0 151.5,99.5 159.0,81.0 167.8,137.6 169.8,198.6 182.4,185.5 193.8,200.9 199.7,195.5 211.4,188.0 217.3,132.6 225.7,114.9 234.9,92.3 242.5,77.1 251.4,61.5 258.4,74.3 265.7,76.6 274.6,66.6 281.9,66.6 288.9,79.3 297.8,81.8 305.4,89.4 313.3,74.3 321.7,79.3 329.2,69.1 335.9,73.8 344.3,81.0 352.2,86.7 359.8,81.3 367.8,74.3 375.0,43.6 389.3,56.5 398.1,77.1 408.5,102.3 415.7,89.4 424.9,107.4 426.9,157.2 435.8,128.0 441.7,183.8 446.5,235.6 459.7,204.2 464.3,241.8 467.1,269.5 467.3,333.0 468.5,338.8 470.1,322.6 474.0,443.8 476.3,389.6 481.6,259.1 493.9,224.5 501.2,279.9 503.1,443.8 504.0,300.7 510.5,361.9 517.4,246.4 529.4,209.5 534.7,255.7 538.2,320.3 542.8,335.3 544.7,325.6 550.8,443.8 557.7,325.6 567.8,431.1 571.5,365.3 575.5,361.9 578.5,335.3 580.8,353.8 583.5,443.8 588.2,365.3 600.2,333.0 608.9,443.8 619.3,376.9 621.6,322.6 640.1,299.5 652.8,240.6 666.4,189.9 669.2,199.5 677.8,266.5 680.2,324.0 689.1,382.6 691.0,443.6 696.3,333.5 704.2,385.0 707.0,443.6 717.8,341.9 728.1,350.3 731.0,334.7 756.8,291.6 762.6,367.0 766.4,313.2 770.5,344.3 773.6,333.5 780.0,237.8 793.0,198.3 800.2,187.1 803.3,249.8 815.7,198.3 825.8,175.6 846.8,175.6 850.4,242.6 853.5,289.2 867.9,228.7 880.8,231.1 889.9,291.6 900.7,261.7 909.5,326.3 911.4,443.6 922.9,402.9 924.4,309.6 927.3,290.4 945.5,351.5 950.2,329.4 964.6,309.6 966.3,347.9 969.4,432.8 971.8,322.7 990.2,268.9 1002.9,213.9 1013.4,189.9 1026.1,205.5 1038.1,208.6 1039.3,258.1 1044.5,201.4 1054.8,235.9 1055.1,236.3 1071.5,241.3 1084.1,226.2 1097.6,218.7 1109.7,257.7 1123.1,240.1 1128.2,226.5 1140.8,211.1 1149.6,203.2 1158.8,213.6 1162.8,213.6 1173.9,193.1 1186.7,198.5 1197.4,201.0 1204.4,251.4 1211.9,206.3 1224.5,188.1 1235.6,208.6 1238.4,259.0 1252.2,206.3 1263.6,186.8 1265.7,242.6 1280.5,251.7 1288.3,278.4 1294.5,229.6 1306.8,264.6 1309.7,324.2 1319.2,254.3 1333.6,232.3 1335.6,289.3 1339.1,292.4 1351.5,260.5 1367.3,328.4 1376.7,309.8 1395.3,329.4 1410.1,393.1 1411.5,443.5 1414.6,368.5 1419.9,420.9 1426.1,257.4 1438.8,292.4 1440.5,345.8" fill="none" stroke="#80f800" stroke-width="2.6" stroke-linejoin="miter" stroke-miterlimit="3"/><polyline clip-path="url(#cb2)" points="75.7,130.9 77.9,136.4 82.6,81.3 90.5,89.7 99.7,104.5 108.1,99.5 115.4,124.2 125.4,137.6 133.3,101.8 143.4,107.0 151.5,99.5 159.0,81.0 167.8,137.6 169.8,198.6 182.4,185.5 193.8,200.9 199.7,195.5 211.4,188.0 217.3,132.6 225.7,114.9 234.9,92.3 242.5,77.1 251.4,61.5 258.4,74.3 265.7,76.6 274.6,66.6 281.9,66.6 288.9,79.3 297.8,81.8 305.4,89.4 313.3,74.3 321.7,79.3 329.2,69.1 335.9,73.8 344.3,81.0 352.2,86.7 359.8,81.3 367.8,74.3 375.0,43.6 389.3,56.5 398.1,77.1 408.5,102.3 415.7,89.4 424.9,107.4 426.9,157.2 435.8,128.0 441.7,183.8 446.5,235.6 459.7,204.2 464.3,241.8 467.1,269.5 467.3,333.0 468.5,338.8 470.1,322.6 474.0,443.8 476.3,389.6 481.6,259.1 493.9,224.5 501.2,279.9 503.1,443.8 504.0,300.7 510.5,361.9 517.4,246.4 529.4,209.5 534.7,255.7 538.2,320.3 542.8,335.3 544.7,325.6 550.8,443.8 557.7,325.6 567.8,431.1 571.5,365.3 575.5,361.9 578.5,335.3 580.8,353.8 583.5,443.8 588.2,365.3 600.2,333.0 608.9,443.8 619.3,376.9 621.6,322.6 640.1,299.5 652.8,240.6 666.4,189.9 669.2,199.5 677.8,266.5 680.2,324.0 689.1,382.6 691.0,443.6 696.3,333.5 704.2,385.0 707.0,443.6 717.8,341.9 728.1,350.3 731.0,334.7 756.8,291.6 762.6,367.0 766.4,313.2 770.5,344.3 773.6,333.5 780.0,237.8 793.0,198.3 800.2,187.1 803.3,249.8 815.7,198.3 825.8,175.6 846.8,175.6 850.4,242.6 853.5,289.2 867.9,228.7 880.8,231.1 889.9,291.6 900.7,261.7 909.5,326.3 911.4,443.6 922.9,402.9 924.4,309.6 927.3,290.4 945.5,351.5 950.2,329.4 964.6,309.6 966.3,347.9 969.4,432.8 971.8,322.7 990.2,268.9 1002.9,213.9 1013.4,189.9 1026.1,205.5 1038.1,208.6 1039.3,258.1 1044.5,201.4 1054.8,235.9 1055.1,236.3 1071.5,241.3 1084.1,226.2 1097.6,218.7 1109.7,257.7 1123.1,240.1 1128.2,226.5 1140.8,211.1 1149.6,203.2 1158.8,213.6 1162.8,213.6 1173.9,193.1 1186.7,198.5 1197.4,201.0 1204.4,251.4 1211.9,206.3 1224.5,188.1 1235.6,208.6 1238.4,259.0 1252.2,206.3 1263.6,186.8 1265.7,242.6 1280.5,251.7 1288.3,278.4 1294.5,229.6 1306.8,264.6 1309.7,324.2 1319.2,254.3 1333.6,232.3 1335.6,289.3 1339.1,292.4 1351.5,260.5 1367.3,328.4 1376.7,309.8 1395.3,329.4 1410.1,393.1 1411.5,443.5 1414.6,368.5 1419.9,420.9 1426.1,257.4 1438.8,292.4 1440.5,345.8" fill="none" stroke="#ffff00" stroke-width="2.6" stroke-linejoin="miter" stroke-miterlimit="3"/><polyline clip-path="url(#cb3)" points="75.7,130.9 77.9,136.4 82.6,81.3 90.5,89.7 99.7,104.5 108.1,99.5 115.4,124.2 125.4,137.6 133.3,101.8 143.4,107.0 151.5,99.5 159.0,81.0 167.8,137.6 169.8,198.6 182.4,185.5 193.8,200.9 199.7,195.5 211.4,188.0 217.3,132.6 225.7,114.9 234.9,92.3 242.5,77.1 251.4,61.5 258.4,74.3 265.7,76.6 274.6,66.6 281.9,66.6 288.9,79.3 297.8,81.8 305.4,89.4 313.3,74.3 321.7,79.3 329.2,69.1 335.9,73.8 344.3,81.0 352.2,86.7 359.8,81.3 367.8,74.3 375.0,43.6 389.3,56.5 398.1,77.1 408.5,102.3 415.7,89.4 424.9,107.4 426.9,157.2 435.8,128.0 441.7,183.8 446.5,235.6 459.7,204.2 464.3,241.8 467.1,269.5 467.3,333.0 468.5,338.8 470.1,322.6 474.0,443.8 476.3,389.6 481.6,259.1 493.9,224.5 501.2,279.9 503.1,443.8 504.0,300.7 510.5,361.9 517.4,246.4 529.4,209.5 534.7,255.7 538.2,320.3 542.8,335.3 544.7,325.6 550.8,443.8 557.7,325.6 567.8,431.1 571.5,365.3 575.5,361.9 578.5,335.3 580.8,353.8 583.5,443.8 588.2,365.3 600.2,333.0 608.9,443.8 619.3,376.9 621.6,322.6 640.1,299.5 652.8,240.6 666.4,189.9 669.2,199.5 677.8,266.5 680.2,324.0 689.1,382.6 691.0,443.6 696.3,333.5 704.2,385.0 707.0,443.6 717.8,341.9 728.1,350.3 731.0,334.7 756.8,291.6 762.6,367.0 766.4,313.2 770.5,344.3 773.6,333.5 780.0,237.8 793.0,198.3 800.2,187.1 803.3,249.8 815.7,198.3 825.8,175.6 846.8,175.6 850.4,242.6 853.5,289.2 867.9,228.7 880.8,231.1 889.9,291.6 900.7,261.7 909.5,326.3 911.4,443.6 922.9,402.9 924.4,309.6 927.3,290.4 945.5,351.5 950.2,329.4 964.6,309.6 966.3,347.9 969.4,432.8 971.8,322.7 990.2,268.9 1002.9,213.9 1013.4,189.9 1026.1,205.5 1038.1,208.6 1039.3,258.1 1044.5,201.4 1054.8,235.9 1055.1,236.3 1071.5,241.3 1084.1,226.2 1097.6,218.7 1109.7,257.7 1123.1,240.1 1128.2,226.5 1140.8,211.1 1149.6,203.2 1158.8,213.6 1162.8,213.6 1173.9,193.1 1186.7,198.5 1197.4,201.0 1204.4,251.4 1211.9,206.3 1224.5,188.1 1235.6,208.6 1238.4,259.0 1252.2,206.3 1263.6,186.8 1265.7,242.6 1280.5,251.7 1288.3,278.4 1294.5,229.6 1306.8,264.6 1309.7,324.2 1319.2,254.3 1333.6,232.3 1335.6,289.3 1339.1,292.4 1351.5,260.5 1367.3,328.4 1376.7,309.8 1395.3,329.4 1410.1,393.1 1411.5,443.5 1414.6,368.5 1419.9,420.9 1426.1,257.4 1438.8,292.4 1440.5,345.8" fill="none" stroke="#ffc000" stroke-width="2.6" stroke-linejoin="miter" stroke-miterlimit="3"/><polyline clip-path="url(#cb4)" points="75.7,130.9 77.9,136.4 82.6,81.3 90.5,89.7 99.7,104.5 108.1,99.5 115.4,124.2 125.4,137.6 133.3,101.8 143.4,107.0 151.5,99.5 159.0,81.0 167.8,137.6 169.8,198.6 182.4,185.5 193.8,200.9 199.7,195.5 211.4,188.0 217.3,132.6 225.7,114.9 234.9,92.3 242.5,77.1 251.4,61.5 258.4,74.3 265.7,76.6 274.6,66.6 281.9,66.6 288.9,79.3 297.8,81.8 305.4,89.4 313.3,74.3 321.7,79.3 329.2,69.1 335.9,73.8 344.3,81.0 352.2,86.7 359.8,81.3 367.8,74.3 375.0,43.6 389.3,56.5 398.1,77.1 408.5,102.3 415.7,89.4 424.9,107.4 426.9,157.2 435.8,128.0 441.7,183.8 446.5,235.6 459.7,204.2 464.3,241.8 467.1,269.5 467.3,333.0 468.5,338.8 470.1,322.6 474.0,443.8 476.3,389.6 481.6,259.1 493.9,224.5 501.2,279.9 503.1,443.8 504.0,300.7 510.5,361.9 517.4,246.4 529.4,209.5 534.7,255.7 538.2,320.3 542.8,335.3 544.7,325.6 550.8,443.8 557.7,325.6 567.8,431.1 571.5,365.3 575.5,361.9 578.5,335.3 580.8,353.8 583.5,443.8 588.2,365.3 600.2,333.0 608.9,443.8 619.3,376.9 621.6,322.6 640.1,299.5 652.8,240.6 666.4,189.9 669.2,199.5 677.8,266.5 680.2,324.0 689.1,382.6 691.0,443.6 696.3,333.5 704.2,385.0 707.0,443.6 717.8,341.9 728.1,350.3 731.0,334.7 756.8,291.6 762.6,367.0 766.4,313.2 770.5,344.3 773.6,333.5 780.0,237.8 793.0,198.3 800.2,187.1 803.3,249.8 815.7,198.3 825.8,175.6 846.8,175.6 850.4,242.6 853.5,289.2 867.9,228.7 880.8,231.1 889.9,291.6 900.7,261.7 909.5,326.3 911.4,443.6 922.9,402.9 924.4,309.6 927.3,290.4 945.5,351.5 950.2,329.4 964.6,309.6 966.3,347.9 969.4,432.8 971.8,322.7 990.2,268.9 1002.9,213.9 1013.4,189.9 1026.1,205.5 1038.1,208.6 1039.3,258.1 1044.5,201.4 1054.8,235.9 1055.1,236.3 1071.5,241.3 1084.1,226.2 1097.6,218.7 1109.7,257.7 1123.1,240.1 1128.2,226.5 1140.8,211.1 1149.6,203.2 1158.8,213.6 1162.8,213.6 1173.9,193.1 1186.7,198.5 1197.4,201.0 1204.4,251.4 1211.9,206.3 1224.5,188.1 1235.6,208.6 1238.4,259.0 1252.2,206.3 1263.6,186.8 1265.7,242.6 1280.5,251.7 1288.3,278.4 1294.5,229.6 1306.8,264.6 1309.7,324.2 1319.2,254.3 1333.6,232.3 1335.6,289.3 1339.1,292.4 1351.5,260.5 1367.3,328.4 1376.7,309.8 1395.3,329.4 1410.1,393.1 1411.5,443.5 1414.6,368.5 1419.9,420.9 1426.1,257.4 1438.8,292.4 1440.5,345.8" fill="none" stroke="#ff0000" stroke-width="2.6" stroke-linejoin="miter" stroke-miterlimit="3"/></g></svg>
<div class="r" style="left:529.3px;top:597px;width:1478.7px;height:552px;background:#fff;"></div>
<div class="r" style="left:529.3px;top:596.3px;width:1478.7px;height:1px;background:#e4e4e4;"></div>
<svg class="r" style="left:545px;top:611px;" width="16" height="14" viewBox="0 0 16 14"><path d="M7 1.5 L2 7 L7 12.5 M14 1.5 L9 7 L14 12.5" fill="none" stroke="#a3a8b0" stroke-width="2.1"/></svg>
<svg class="r" style="left:570px;top:611px;" width="9" height="14" viewBox="0 0 9 14"><path d="M7.5 1.5 L2.5 7 L7.5 12.5" fill="none" stroke="#a3a8b0" stroke-width="2.1"/></svg>
<div class="r" style="left:594px;top:602px;width:49px;height:32px;background:#f5f5f5;border:1px solid #e6e6e6;border-radius:4px;"></div>
<div class="t" style="top:609.5px;font-size:16px;line-height:20px;color:#a3a8b0;left:318.5px;width:600px;text-align:center;">1</div>
<div class="t" style="top:609.5px;font-size:16px;line-height:20px;color:#1f2937;left:653.4px;">of 1</div>
<svg class="r" style="left:696px;top:611px;" width="9" height="14" viewBox="0 0 9 14"><path d="M1.5 1.5 L6.5 7 L1.5 12.5" fill="none" stroke="#a3a8b0" stroke-width="2.1"/></svg>
<svg class="r" style="left:714px;top:611px;" width="16" height="14" viewBox="0 0 16 14"><path d="M2 1.5 L7 7 L2 12.5 M9 1.5 L14 7 L9 12.5" fill="none" stroke="#a3a8b0" stroke-width="2.1"/></svg>
<div class="t" style="top:610.0px;font-size:16px;line-height:20px;color:#1f2937;left:742.2px;letter-spacing:0.18px;">Items from 1 to 8 of 8</div>
<div class="r" style="left:908px;top:602px;width:74px;height:32px;border:1px solid #e3e3e3;border-radius:4px;"></div>
<div class="t" style="top:608.5px;font-size:16px;line-height:20px;color:#1f2937;left:918.3px;">50</div>
<svg class="r" style="left:956px;top:614px;" width="12" height="8" viewBox="0 0 12 8"><path d="M1.2 1.5 L6 6.2 L10.8 1.5" fill="none" stroke="#39414e" stroke-width="1.5"/></svg>
<div class="t" style="top:609.4px;font-size:16px;line-height:20px;color:#1f2937;left:1106.8px;width:600px;text-align:center;">Eco driving</div>
<svg class="r" style="left:1828px;top:607px;" width="22" height="21" viewBox="0 0 22 21"><rect x="5" y="1" width="12" height="6" fill="none" stroke="#5b616c" stroke-width="1.8"/><rect x="1" y="7" width="20" height="9" rx="2" fill="none" stroke="#5b616c" stroke-width="2"/><rect x="5" y="12" width="12" height="8" fill="#fff" stroke="#5b616c" stroke-width="1.8"/></svg>
<div class="r" style="left:1865px;top:601px;width:91px;height:33px;border:1px solid #e3e3e3;border-radius:4px;background:#fff;"></div>
<div class="t" style="top:609.0px;font-size:16px;line-height:20px;color:#1f2937;left:1875.5px;">Export</div>
<svg class="r" style="left:1933px;top:614px;" width="11" height="7" viewBox="0 0 11 7"><path d="M1 1 L5.5 5.5 L10 1" fill="none" stroke="#1f2937" stroke-width="1.7"/></svg>
<svg class="r" style="left:1974px;top:611px;" width="13" height="13" viewBox="0 0 13 13"><path d="M1 1 L12 12 M12 1 L1 12" stroke="#5b616c" stroke-width="1.7"/></svg>
<div class="r" style="left:530px;top:639px;width:1470px;height:1px;background:#e6e6e6;"></div>
<div class="t" style="top:647.4px;font-size:16px;line-height:20px;color:#1f2937;left:539.4px;">Trip</div>
<svg class="r" style="left:580px;top:639px;" width="20" height="33" viewBox="0 0 20 33"><path d="M1 0 L16 16.5 L1 33" fill="none" stroke="#dcdcdc" stroke-width="1.4"/></svg>
<div class="t" style="top:647.4px;font-size:16px;line-height:20px;color:#6b7078;left:607.8px;">Detalization</div>
<svg class="r" style="left:706px;top:639px;" width="20" height="33" viewBox="0 0 20 33"><path d="M1 0 L16 16.5 L1 33" fill="none" stroke="#dcdcdc" stroke-width="1.4"/></svg>
<div class="r" style="left:530px;top:672px;width:1470px;height:35px;background:#f4f4f4;"></div>
<div class="r" style="left:530px;top:707px;width:1470px;height:1px;background:#e3e3e3;"></div>
<div class="r" style="left:566px;top:672px;width:1px;height:35px;background:#e3e3e3;"></div>
<div class="r" style="left:622px;top:672px;width:1px;height:35px;background:#e3e3e3;"></div>
<div class="r" style="left:669px;top:672px;width:1px;height:35px;background:#e3e3e3;"></div>
<div class="r" style="left:870px;top:672px;width:1px;height:35px;background:#e3e3e3;"></div>
<div class="r" style="left:927px;top:672px;width:1px;height:35px;background:#e3e3e3;"></div>
<div class="r" style="left:1081px;top:672px;width:1px;height:35px;background:#e3e3e3;"></div>
<div class="r" style="left:1170px;top:672px;width:1px;height:35px;background:#e3e3e3;"></div>
<div class="r" style="left:1343px;top:672px;width:1px;height:35px;background:#e3e3e3;"></div>
<div class="r" style="left:1517px;top:672px;width:1px;height:35px;background:#e3e3e3;"></div>
<div class="r" style="left:1598px;top:672px;width:1px;height:35px;background:#e3e3e3;"></div>
<div class="t" style="top:681.6px;font-size:16px;line-height:20px;color:#1f2937;left:632.8px;-webkit-text-stroke:0.45px #1f2937;letter-spacing:0.1px;">№</div>
<div class="t" style="top:681.6px;font-size:16px;line-height:20px;color:#1f2937;left:679.6px;-webkit-text-stroke:0.45px #1f2937;letter-spacing:0.1px;">Grouping</div>
<div class="t" style="top:681.6px;font-size:16px;line-height:20px;color:#1f2937;left:880.4px;-webkit-text-stroke:0.45px #1f2937;letter-spacing:0.1px;">Rank</div>
<div class="t" style="top:681.6px;font-size:16px;line-height:20px;color:#1f2937;left:937.4px;-webkit-text-stroke:0.45px #1f2937;letter-spacing:0.1px;">Violation</div>
<div class="t" style="top:681.6px;font-size:16px;line-height:20px;color:#1f2937;left:1091.9px;-webkit-text-stroke:0.45px #1f2937;letter-spacing:0.1px;">Penalties</div>
<div class="t" style="top:681.6px;font-size:16px;line-height:20px;color:#1f2937;left:1180.8px;-webkit-text-stroke:0.45px #1f2937;letter-spacing:0.1px;">Beginning</div>
<div class="t" style="top:681.6px;font-size:16px;line-height:20px;color:#1f2937;left:1353.3px;-webkit-text-stroke:0.45px #1f2937;letter-spacing:0.1px;">End</div>
<div class="t" style="top:681.6px;font-size:16px;line-height:20px;color:#1f2937;left:1526.5px;-webkit-text-stroke:0.45px #1f2937;letter-spacing:0.1px;">Duration</div>
<div class="r" style="left:530px;top:747px;width:1068px;height:1px;background:#e6e6e6;"></div>
<div class="r" style="left:566px;top:707px;width:1px;height:40px;background:#e6e6e6;"></div>
<div class="r" style="left:622px;top:707px;width:1px;height:40px;background:#e6e6e6;"></div>
<div class="r" style="left:669px;top:707px;width:1px;height:40px;background:#e6e6e6;"></div>
<div class="r" style="left:870px;top:707px;width:1px;height:40px;background:#e6e6e6;"></div>
<div class="r" style="left:927px;top:707px;width:1px;height:40px;background:#e6e6e6;"></div>
<div class="r" style="left:1081px;top:707px;width:1px;height:40px;background:#e6e6e6;"></div>
<div class="r" style="left:1170px;top:707px;width:1px;height:40px;background:#e6e6e6;"></div>
<div class="r" style="left:1343px;top:707px;width:1px;height:40px;background:#e6e6e6;"></div>
<div class="r" style="left:1517px;top:707px;width:1px;height:40px;background:#e6e6e6;"></div>
<div class="r" style="left:1598px;top:707px;width:1px;height:40px;background:#e6e6e6;"></div>
<svg class="r" style="left:540px;top:718px;" width="17" height="19" viewBox="0 0 17 19"><path d="M0.1 1.3 L5.85 4.5 L0.1 7.8 Z" fill="#1f2937"/><path d="M7.2 4.5 H11.8 A3.05 3.05 0 0 1 11.8 10.6 H4.3 A2.85 2.85 0 0 0 4.3 16.3 H8.8" fill="none" stroke="#1f2937" stroke-width="2"/><rect x="11.1" y="14.2" width="4.3" height="4.4" fill="#1f2937"/></svg>
<svg class="r" style="left:580.3px;top:719.7px;" width="14" height="14" viewBox="0 0 14 14"><rect x="0" y="0" width="13.7" height="13.7" rx="2" fill="#5b616c"/><path d="M6.85 2.4 V11.3 M2.05 6.85 H11.65" stroke="#fff" stroke-width="2.3"/></svg>
<div class="t" style="top:718.2px;font-size:16px;line-height:20px;color:#1f2937;left:632.8px;">1</div>
<div class="t" style="top:718.2px;font-size:16px;line-height:20px;color:#1f2937;left:679.6px;">Trip 2024-12-06 12:41:10</div>
<div class="t" style="top:718.2px;font-size:16px;line-height:20px;color:#1f2937;left:880.4px;">1.9</div>
<svg class="r" style="left:937.7px;top:727.4px;" width="21.3" height="1.25" viewBox="0 0 21.3 1.25"><rect x="0.00" y="0" width="3.5" height="1.25" fill="#1f2937"/><rect x="4.45" y="0" width="3.5" height="1.25" fill="#1f2937"/><rect x="8.90" y="0" width="3.5" height="1.25" fill="#1f2937"/><rect x="13.35" y="0" width="3.5" height="1.25" fill="#1f2937"/><rect x="17.80" y="0" width="3.5" height="1.25" fill="#1f2937"/></svg>
<div class="t" style="top:718.2px;font-size:16px;line-height:20px;color:#1f2937;left:1091.9px;">1244</div>
<div class="t" style="top:718.2px;font-size:16px;line-height:20px;color:#d63fd0;left:1180.8px;">2024-12-06 12:41:10</div>
<div class="t" style="top:718.2px;font-size:16px;line-height:20px;color:#d63fd0;left:1353.3px;">2024-12-06 12:45:10</div>
<div class="t" style="top:718.2px;font-size:16px;line-height:20px;color:#1f2937;left:1526.5px;">0:04:00</div>
<div class="r" style="left:530px;top:786px;width:1068px;height:1px;background:#e6e6e6;"></div>
<div class="r" style="left:566px;top:747px;width:1px;height:39px;background:#e6e6e6;"></div>
<div class="r" style="left:622px;top:747px;width:1px;height:39px;background:#e6e6e6;"></div>
<div class="r" style="left:669px;top:747px;width:1px;height:39px;background:#e6e6e6;"></div>
<div class="r" style="left:870px;top:747px;width:1px;height:39px;background:#e6e6e6;"></div>
<div class="r" style="left:927px;top:747px;width:1px;height:39px;background:#e6e6e6;"></div>
<div class="r" style="left:1081px;top:747px;width:1px;height:39px;background:#e6e6e6;"></div>
<div class="r" style="left:1170px;top:747px;width:1px;height:39px;background:#e6e6e6;"></div>
<div class="r" style="left:1343px;top:747px;width:1px;height:39px;background:#e6e6e6;"></div>
<div class="r" style="left:1517px;top:747px;width:1px;height:39px;background:#e6e6e6;"></div>
<div class="r" style="left:1598px;top:747px;width:1px;height:39px;background:#e6e6e6;"></div>
<svg class="r" style="left:540px;top:757px;" width="17" height="19" viewBox="0 0 17 19"><path d="M0.1 1.3 L5.85 4.5 L0.1 7.8 Z" fill="#1f2937"/><path d="M7.2 4.5 H11.8 A3.05 3.05 0 0 1 11.8 10.6 H4.3 A2.85 2.85 0 0 0 4.3 16.3 H8.8" fill="none" stroke="#1f2937" stroke-width="2"/><rect x="11.1" y="14.2" width="4.3" height="4.4" fill="#1f2937"/></svg>
<svg class="r" style="left:580.3px;top:758.7px;" width="14" height="14" viewBox="0 0 14 14"><rect x="0" y="0" width="13.7" height="13.7" rx="2" fill="#5b616c"/><path d="M2.05 6.85 H11.65" stroke="#fff" stroke-width="2.3"/></svg>
<div class="t" style="top:757.3px;font-size:16px;line-height:20px;color:#1f2937;left:632.8px;">2</div>
<div class="t" style="top:757.3px;font-size:16px;line-height:20px;color:#1f2937;left:679.6px;">Trip 2024-12-06 11:20:13</div>
<div class="t" style="top:757.3px;font-size:16px;line-height:20px;color:#1f2937;left:880.4px;">2.8</div>
<svg class="r" style="left:937.7px;top:766.5px;" width="21.3" height="1.25" viewBox="0 0 21.3 1.25"><rect x="0.00" y="0" width="3.5" height="1.25" fill="#1f2937"/><rect x="4.45" y="0" width="3.5" height="1.25" fill="#1f2937"/><rect x="8.90" y="0" width="3.5" height="1.25" fill="#1f2937"/><rect x="13.35" y="0" width="3.5" height="1.25" fill="#1f2937"/><rect x="17.80" y="0" width="3.5" height="1.25" fill="#1f2937"/></svg>
<div class="t" style="top:757.3px;font-size:16px;line-height:20px;color:#1f2937;left:1091.9px;">544</div>
<div class="t" style="top:757.3px;font-size:16px;line-height:20px;color:#d63fd0;left:1180.8px;">2024-12-06 11:20:13</div>
<div class="t" style="top:757.3px;font-size:16px;line-height:20px;color:#d63fd0;left:1353.3px;">2024-12-06 11:46:28</div>
<div class="t" style="top:757.3px;font-size:16px;line-height:20px;color:#1f2937;left:1526.5px;">0:26:15</div>
<div class="r" style="left:530px;top:787px;width:1068px;height:33px;background:#e6f0f7;"></div>
<div class="r" style="left:567px;top:787px;width:56px;height:33px;background:#fff;"></div>
<div class="r" style="left:530px;top:820px;width:1068px;height:1px;background:#e6e6e6;"></div>
<div class="r" style="left:566px;top:786px;width:1px;height:34px;background:#e6e6e6;"></div>
<div class="r" style="left:622px;top:786px;width:1px;height:34px;background:#e6e6e6;"></div>
<div class="r" style="left:669px;top:786px;width:1px;height:34px;background:#e6e6e6;"></div>
<div class="r" style="left:870px;top:786px;width:1px;height:34px;background:#e6e6e6;"></div>
<div class="r" style="left:927px;top:786px;width:1px;height:34px;background:#e6e6e6;"></div>
<div class="r" style="left:1081px;top:786px;width:1px;height:34px;background:#e6e6e6;"></div>
<div class="r" style="left:1170px;top:786px;width:1px;height:34px;background:#e6e6e6;"></div>
<div class="r" style="left:1343px;top:786px;width:1px;height:34px;background:#e6e6e6;"></div>
<div class="r" style="left:1517px;top:786px;width:1px;height:34px;background:#e6e6e6;"></div>
<div class="r" style="left:1598px;top:786px;width:1px;height:34px;background:#e6e6e6;"></div>
<svg class="r" style="left:540px;top:793px;" width="17" height="19" viewBox="0 0 17 19"><path d="M0.1 1.3 L5.85 4.5 L0.1 7.8 Z" fill="#1f2937"/><path d="M7.2 4.5 H11.8 A3.05 3.05 0 0 1 11.8 10.6 H4.3 A2.85 2.85 0 0 0 4.3 16.3 H8.8" fill="none" stroke="#1f2937" stroke-width="2"/><rect x="11.1" y="14.2" width="4.3" height="4.4" fill="#1f2937"/></svg>
<svg class="r" style="left:581px;top:786px;" width="30" height="40" viewBox="0 0 30 40"><path d="M2.1 9.0 V26.5 M2.1 19.0 H25.2" fill="none" stroke="#3d8fd6" stroke-width="1.1" stroke-dasharray="1.6 1.4" transform="translate(0,0.30)"/></svg>
<div class="t" style="top:793.3px;font-size:16px;line-height:20px;color:#1f2937;left:632.8px;">2.1</div>
<div class="t" style="top:793.3px;font-size:16px;line-height:20px;color:#1f2937;left:679.6px;">2024-12-06 11:35:24</div>
<svg class="r" style="left:880.7px;top:802.5px;" width="21.3" height="1.25" viewBox="0 0 21.3 1.25"><rect x="0.00" y="0" width="3.5" height="1.25" fill="#1f2937"/><rect x="4.45" y="0" width="3.5" height="1.25" fill="#1f2937"/><rect x="8.90" y="0" width="3.5" height="1.25" fill="#1f2937"/><rect x="13.35" y="0" width="3.5" height="1.25" fill="#1f2937"/><rect x="17.80" y="0" width="3.5" height="1.25" fill="#1f2937"/></svg>
<div class="t" style="top:793.3px;font-size:16px;line-height:20px;color:#1f2937;left:937.4px;">Brake: extreme</div>
<div class="t" style="top:793.3px;font-size:16px;line-height:20px;color:#1f2937;left:1091.9px;">2000</div>
<div class="t" style="top:793.3px;font-size:16px;line-height:20px;color:#d63fd0;left:1180.8px;">2024-12-06 11:35:24</div>
<div class="t" style="top:793.3px;font-size:16px;line-height:20px;color:#d63fd0;left:1353.3px;">2024-12-06 11:35:28</div>
<svg class="r" style="left:1526.8px;top:802.5px;" width="21.3" height="1.25" viewBox="0 0 21.3 1.25"><rect x="0.00" y="0" width="3.5" height="1.25" fill="#1f2937"/><rect x="4.45" y="0" width="3.5" height="1.25" fill="#1f2937"/><rect x="8.90" y="0" width="3.5" height="1.25" fill="#1f2937"/><rect x="13.35" y="0" width="3.5" height="1.25" fill="#1f2937"/><rect x="17.80" y="0" width="3.5" height="1.25" fill="#1f2937"/></svg>
<div class="r" style="left:530px;top:821px;width:1068px;height:32px;background:#e6f0f7;"></div>
<div class="r" style="left:567px;top:821px;width:56px;height:32px;background:#fff;"></div>
<div class="r" style="left:530px;top:853px;width:1068px;height:1px;background:#e6e6e6;"></div>
<div class="r" style="left:566px;top:820px;width:1px;height:33px;background:#e6e6e6;"></div>
<div class="r" style="left:622px;top:820px;width:1px;height:33px;background:#e6e6e6;"></div>
<div class="r" style="left:669px;top:820px;width:1px;height:33px;background:#e6e6e6;"></div>
<div class="r" style="left:870px;top:820px;width:1px;height:33px;background:#e6e6e6;"></div>
<div class="r" style="left:927px;top:820px;width:1px;height:33px;background:#e6e6e6;"></div>
<div class="r" style="left:1081px;top:820px;width:1px;height:33px;background:#e6e6e6;"></div>
<div class="r" style="left:1170px;top:820px;width:1px;height:33px;background:#e6e6e6;"></div>
<div class="r" style="left:1343px;top:820px;width:1px;height:33px;background:#e6e6e6;"></div>
<div class="r" style="left:1517px;top:820px;width:1px;height:33px;background:#e6e6e6;"></div>
<div class="r" style="left:1598px;top:820px;width:1px;height:33px;background:#e6e6e6;"></div>
<svg class="r" style="left:540px;top:827px;" width="17" height="19" viewBox="0 0 17 19"><path d="M0.1 1.3 L5.85 4.5 L0.1 7.8 Z" fill="#1f2937"/><path d="M7.2 4.5 H11.8 A3.05 3.05 0 0 1 11.8 10.6 H4.3 A2.85 2.85 0 0 0 4.3 16.3 H8.8" fill="none" stroke="#1f2937" stroke-width="2"/><rect x="11.1" y="14.2" width="4.3" height="4.4" fill="#1f2937"/></svg>
<svg class="r" style="left:581px;top:820px;" width="30" height="40" viewBox="0 0 30 40"><path d="M2.1 8.8 V26.3 M2.1 18.8 H25.2" fill="none" stroke="#3d8fd6" stroke-width="1.1" stroke-dasharray="1.6 1.4" transform="translate(0,0.50)"/></svg>
<div class="t" style="top:827.3px;font-size:16px;line-height:20px;color:#1f2937;left:632.8px;">2.2</div>
<div class="t" style="top:827.3px;font-size:16px;line-height:20px;color:#1f2937;left:679.6px;">2024-12-06 11:35:12</div>
<svg class="r" style="left:880.7px;top:836.5px;" width="21.3" height="1.25" viewBox="0 0 21.3 1.25"><rect x="0.00" y="0" width="3.5" height="1.25" fill="#1f2937"/><rect x="4.45" y="0" width="3.5" height="1.25" fill="#1f2937"/><rect x="8.90" y="0" width="3.5" height="1.25" fill="#1f2937"/><rect x="13.35" y="0" width="3.5" height="1.25" fill="#1f2937"/><rect x="17.80" y="0" width="3.5" height="1.25" fill="#1f2937"/></svg>
<div class="t" style="top:827.3px;font-size:16px;line-height:20px;color:#1f2937;left:937.4px;">Speeding: medium</div>
<div class="t" style="top:827.3px;font-size:16px;line-height:20px;color:#1f2937;left:1091.9px;">2000</div>
<div class="t" style="top:827.3px;font-size:16px;line-height:20px;color:#d63fd0;left:1180.8px;">2024-12-06 11:35:12</div>
<div class="t" style="top:827.3px;font-size:16px;line-height:20px;color:#d63fd0;left:1353.3px;">2024-12-06 11:35:24</div>
<svg class="r" style="left:1526.8px;top:836.5px;" width="21.3" height="1.25" viewBox="0 0 21.3 1.25"><rect x="0.00" y="0" width="3.5" height="1.25" fill="#1f2937"/><rect x="4.45" y="0" width="3.5" height="1.25" fill="#1f2937"/><rect x="8.90" y="0" width="3.5" height="1.25" fill="#1f2937"/><rect x="13.35" y="0" width="3.5" height="1.25" fill="#1f2937"/><rect x="17.80" y="0" width="3.5" height="1.25" fill="#1f2937"/></svg>
<div class="r" style="left:530px;top:854px;width:1068px;height:32px;background:#e6f0f7;"></div>
<div class="r" style="left:567px;top:854px;width:56px;height:32px;background:#fff;"></div>
<div class="r" style="left:530px;top:886px;width:1068px;height:1px;background:#e6e6e6;"></div>
<div class="r" style="left:566px;top:853px;width:1px;height:33px;background:#e6e6e6;"></div>
<div class="r" style="left:622px;top:853px;width:1px;height:33px;background:#e6e6e6;"></div>
<div class="r" style="left:669px;top:853px;width:1px;height:33px;background:#e6e6e6;"></div>
<div class="r" style="left:870px;top:853px;width:1px;height:33px;background:#e6e6e6;"></div>
<div class="r" style="left:927px;top:853px;width:1px;height:33px;background:#e6e6e6;"></div>
<div class="r" style="left:1081px;top:853px;width:1px;height:33px;background:#e6e6e6;"></div>
<div class="r" style="left:1170px;top:853px;width:1px;height:33px;background:#e6e6e6;"></div>
<div class="r" style="left:1343px;top:853px;width:1px;height:33px;background:#e6e6e6;"></div>
<div class="r" style="left:1517px;top:853px;width:1px;height:33px;background:#e6e6e6;"></div>
<div class="r" style="left:1598px;top:853px;width:1px;height:33px;background:#e6e6e6;"></div>
<svg class="r" style="left:540px;top:859px;" width="17" height="19" viewBox="0 0 17 19"><path d="M0.1 1.3 L5.85 4.5 L0.1 7.8 Z" fill="#1f2937"/><path d="M7.2 4.5 H11.8 A3.05 3.05 0 0 1 11.8 10.6 H4.3 A2.85 2.85 0 0 0 4.3 16.3 H8.8" fill="none" stroke="#1f2937" stroke-width="2"/><rect x="11.1" y="14.2" width="4.3" height="4.4" fill="#1f2937"/></svg>
<svg class="r" style="left:581px;top:853px;" width="30" height="40" viewBox="0 0 30 40"><path d="M2.1 11.2 V19.1 M2.1 19.1 H25.2" fill="none" stroke="#3d8fd6" stroke-width="1.1" stroke-dasharray="1.6 1.4" transform="translate(0,-0.40)"/></svg>
<div class="t" style="top:859.3px;font-size:16px;line-height:20px;color:#1f2937;left:632.8px;">2.3</div>
<div class="t" style="top:859.3px;font-size:16px;line-height:20px;color:#1f2937;left:679.6px;">2024-12-06 11:32:38</div>
<svg class="r" style="left:880.7px;top:868.5px;" width="21.3" height="1.25" viewBox="0 0 21.3 1.25"><rect x="0.00" y="0" width="3.5" height="1.25" fill="#1f2937"/><rect x="4.45" y="0" width="3.5" height="1.25" fill="#1f2937"/><rect x="8.90" y="0" width="3.5" height="1.25" fill="#1f2937"/><rect x="13.35" y="0" width="3.5" height="1.25" fill="#1f2937"/><rect x="17.80" y="0" width="3.5" height="1.25" fill="#1f2937"/></svg>
<div class="t" style="top:859.3px;font-size:16px;line-height:20px;color:#1f2937;left:937.4px;">Brake: extreme</div>
<div class="t" style="top:859.3px;font-size:16px;line-height:20px;color:#1f2937;left:1091.9px;">2000</div>
<div class="t" style="top:859.3px;font-size:16px;line-height:20px;color:#d63fd0;left:1180.8px;">2024-12-06 11:32:38</div>
<div class="t" style="top:859.3px;font-size:16px;line-height:20px;color:#d63fd0;left:1353.3px;">2024-12-06 11:32:44</div>
<svg class="r" style="left:1526.8px;top:868.5px;" width="21.3" height="1.25" viewBox="0 0 21.3 1.25"><rect x="0.00" y="0" width="3.5" height="1.25" fill="#1f2937"/><rect x="4.45" y="0" width="3.5" height="1.25" fill="#1f2937"/><rect x="8.90" y="0" width="3.5" height="1.25" fill="#1f2937"/><rect x="13.35" y="0" width="3.5" height="1.25" fill="#1f2937"/><rect x="17.80" y="0" width="3.5" height="1.25" fill="#1f2937"/></svg>
<div class="r" style="left:530px;top:925px;width:1068px;height:1px;background:#e6e6e6;"></div>
<div class="r" style="left:566px;top:886px;width:1px;height:39px;background:#e6e6e6;"></div>
<div class="r" style="left:622px;top:886px;width:1px;height:39px;background:#e6e6e6;"></div>
<div class="r" style="left:669px;top:886px;width:1px;height:39px;background:#e6e6e6;"></div>
<div class="r" style="left:870px;top:886px;width:1px;height:39px;background:#e6e6e6;"></div>
<div class="r" style="left:927px;top:886px;width:1px;height:39px;background:#e6e6e6;"></div>
<div class="r" style="left:1081px;top:886px;width:1px;height:39px;background:#e6e6e6;"></div>
<div class="r" style="left:1170px;top:886px;width:1px;height:39px;background:#e6e6e6;"></div>
<div class="r" style="left:1343px;top:886px;width:1px;height:39px;background:#e6e6e6;"></div>
<div class="r" style="left:1517px;top:886px;width:1px;height:39px;background:#e6e6e6;"></div>
<div class="r" style="left:1598px;top:886px;width:1px;height:39px;background:#e6e6e6;"></div>
<svg class="r" style="left:540px;top:896px;" width="17" height="19" viewBox="0 0 17 19"><path d="M0.1 1.3 L5.85 4.5 L0.1 7.8 Z" fill="#1f2937"/><path d="M7.2 4.5 H11.8 A3.05 3.05 0 0 1 11.8 10.6 H4.3 A2.85 2.85 0 0 0 4.3 16.3 H8.8" fill="none" stroke="#1f2937" stroke-width="2"/><rect x="11.1" y="14.2" width="4.3" height="4.4" fill="#1f2937"/></svg>
<svg class="r" style="left:580.3px;top:897.7px;" width="14" height="14" viewBox="0 0 14 14"><rect x="0" y="0" width="13.7" height="13.7" rx="2" fill="#5b616c"/><path d="M6.85 2.4 V11.3 M2.05 6.85 H11.65" stroke="#fff" stroke-width="2.3"/></svg>
<div class="t" style="top:896.0px;font-size:16px;line-height:20px;color:#1f2937;left:632.8px;">3</div>
<div class="t" style="top:896.0px;font-size:16px;line-height:20px;color:#1f2937;left:679.6px;">Trip 2024-12-06 12:00:06</div>
<div class="t" style="top:896.0px;font-size:16px;line-height:20px;color:#1f2937;left:880.4px;">3.0</div>
<svg class="r" style="left:937.7px;top:905.2px;" width="21.3" height="1.25" viewBox="0 0 21.3 1.25"><rect x="0.00" y="0" width="3.5" height="1.25" fill="#1f2937"/><rect x="4.45" y="0" width="3.5" height="1.25" fill="#1f2937"/><rect x="8.90" y="0" width="3.5" height="1.25" fill="#1f2937"/><rect x="13.35" y="0" width="3.5" height="1.25" fill="#1f2937"/><rect x="17.80" y="0" width="3.5" height="1.25" fill="#1f2937"/></svg>
<div class="t" style="top:896.0px;font-size:16px;line-height:20px;color:#1f2937;left:1091.9px;">480</div>
<div class="t" style="top:896.0px;font-size:16px;line-height:20px;color:#d63fd0;left:1180.8px;">2024-12-06 12:00:06</div>
<div class="t" style="top:896.0px;font-size:16px;line-height:20px;color:#d63fd0;left:1353.3px;">2024-12-06 12:18:29</div>
<div class="t" style="top:896.0px;font-size:16px;line-height:20px;color:#1f2937;left:1526.5px;">0:18:23</div>
<div class="r" style="left:530px;top:965px;width:1068px;height:1px;background:#e6e6e6;"></div>
<div class="r" style="left:566px;top:925px;width:1px;height:40px;background:#e6e6e6;"></div>
<div class="r" style="left:622px;top:925px;width:1px;height:40px;background:#e6e6e6;"></div>
<div class="r" style="left:669px;top:925px;width:1px;height:40px;background:#e6e6e6;"></div>
<div class="r" style="left:870px;top:925px;width:1px;height:40px;background:#e6e6e6;"></div>
<div class="r" style="left:927px;top:925px;width:1px;height:40px;background:#e6e6e6;"></div>
<div class="r" style="left:1081px;top:925px;width:1px;height:40px;background:#e6e6e6;"></div>
<div class="r" style="left:1170px;top:925px;width:1px;height:40px;background:#e6e6e6;"></div>
<div class="r" style="left:1343px;top:925px;width:1px;height:40px;background:#e6e6e6;"></div>
<div class="r" style="left:1517px;top:925px;width:1px;height:40px;background:#e6e6e6;"></div>
<div class="r" style="left:1598px;top:925px;width:1px;height:40px;background:#e6e6e6;"></div>
<svg class="r" style="left:540px;top:936px;" width="17" height="19" viewBox="0 0 17 19"><path d="M0.1 1.3 L5.85 4.5 L0.1 7.8 Z" fill="#1f2937"/><path d="M7.2 4.5 H11.8 A3.05 3.05 0 0 1 11.8 10.6 H4.3 A2.85 2.85 0 0 0 4.3 16.3 H8.8" fill="none" stroke="#1f2937" stroke-width="2"/><rect x="11.1" y="14.2" width="4.3" height="4.4" fill="#1f2937"/></svg>
<svg class="r" style="left:580.3px;top:937.7px;" width="14" height="14" viewBox="0 0 14 14"><rect x="0" y="0" width="13.7" height="13.7" rx="2" fill="#5b616c"/><path d="M6.85 2.4 V11.3 M2.05 6.85 H11.65" stroke="#fff" stroke-width="2.3"/></svg>
<div class="t" style="top:936.0px;font-size:16px;line-height:20px;color:#1f2937;left:632.8px;">4</div>
<div class="t" style="top:936.0px;font-size:16px;line-height:20px;color:#1f2937;left:679.6px;">Trip 2024-12-06 13:31:32</div>
<div class="t" style="top:936.0px;font-size:16px;line-height:20px;color:#1f2937;left:880.4px;">3.9</div>
<svg class="r" style="left:937.7px;top:945.2px;" width="21.3" height="1.25" viewBox="0 0 21.3 1.25"><rect x="0.00" y="0" width="3.5" height="1.25" fill="#1f2937"/><rect x="4.45" y="0" width="3.5" height="1.25" fill="#1f2937"/><rect x="8.90" y="0" width="3.5" height="1.25" fill="#1f2937"/><rect x="13.35" y="0" width="3.5" height="1.25" fill="#1f2937"/><rect x="17.80" y="0" width="3.5" height="1.25" fill="#1f2937"/></svg>
<div class="t" style="top:936.0px;font-size:16px;line-height:20px;color:#1f2937;left:1091.9px;">278</div>
<div class="t" style="top:936.0px;font-size:16px;line-height:20px;color:#d63fd0;left:1180.8px;">2024-12-06 13:31:32</div>
<div class="t" style="top:936.0px;font-size:16px;line-height:20px;color:#d63fd0;left:1353.3px;">2024-12-06 13:45:38</div>
<div class="t" style="top:936.0px;font-size:16px;line-height:20px;color:#1f2937;left:1526.5px;">0:14:06</div>
<div class="r" style="left:530px;top:1004px;width:1068px;height:1px;background:#e6e6e6;"></div>
<div class="r" style="left:566px;top:965px;width:1px;height:39px;background:#e6e6e6;"></div>
<div class="r" style="left:622px;top:965px;width:1px;height:39px;background:#e6e6e6;"></div>
<div class="r" style="left:669px;top:965px;width:1px;height:39px;background:#e6e6e6;"></div>
<div class="r" style="left:870px;top:965px;width:1px;height:39px;background:#e6e6e6;"></div>
<div class="r" style="left:927px;top:965px;width:1px;height:39px;background:#e6e6e6;"></div>
<div class="r" style="left:1081px;top:965px;width:1px;height:39px;background:#e6e6e6;"></div>
<div class="r" style="left:1170px;top:965px;width:1px;height:39px;background:#e6e6e6;"></div>
<div class="r" style="left:1343px;top:965px;width:1px;height:39px;background:#e6e6e6;"></div>
<div class="r" style="left:1517px;top:965px;width:1px;height:39px;background:#e6e6e6;"></div>
<div class="r" style="left:1598px;top:965px;width:1px;height:39px;background:#e6e6e6;"></div>
<svg class="r" style="left:540px;top:975px;" width="17" height="19" viewBox="0 0 17 19"><path d="M0.1 1.3 L5.85 4.5 L0.1 7.8 Z" fill="#1f2937"/><path d="M7.2 4.5 H11.8 A3.05 3.05 0 0 1 11.8 10.6 H4.3 A2.85 2.85 0 0 0 4.3 16.3 H8.8" fill="none" stroke="#1f2937" stroke-width="2"/><rect x="11.1" y="14.2" width="4.3" height="4.4" fill="#1f2937"/></svg>
<svg class="r" style="left:580.3px;top:976.7px;" width="14" height="14" viewBox="0 0 14 14"><rect x="0" y="0" width="13.7" height="13.7" rx="2" fill="#5b616c"/><path d="M6.85 2.4 V11.3 M2.05 6.85 H11.65" stroke="#fff" stroke-width="2.3"/></svg>
<div class="t" style="top:975.5px;font-size:16px;line-height:20px;color:#1f2937;left:632.8px;">5</div>
<div class="t" style="top:975.5px;font-size:16px;line-height:20px;color:#1f2937;left:679.6px;">Trip 2024-12-06 12:53:32</div>
<div class="t" style="top:975.5px;font-size:16px;line-height:20px;color:#1f2937;left:880.4px;">4.3</div>
<svg class="r" style="left:937.7px;top:984.7px;" width="21.3" height="1.25" viewBox="0 0 21.3 1.25"><rect x="0.00" y="0" width="3.5" height="1.25" fill="#1f2937"/><rect x="4.45" y="0" width="3.5" height="1.25" fill="#1f2937"/><rect x="8.90" y="0" width="3.5" height="1.25" fill="#1f2937"/><rect x="13.35" y="0" width="3.5" height="1.25" fill="#1f2937"/><rect x="17.80" y="0" width="3.5" height="1.25" fill="#1f2937"/></svg>
<div class="t" style="top:975.5px;font-size:16px;line-height:20px;color:#1f2937;left:1091.9px;">227</div>
<div class="t" style="top:975.5px;font-size:16px;line-height:20px;color:#d63fd0;left:1180.8px;">2024-12-06 12:53:32</div>
<div class="t" style="top:975.5px;font-size:16px;line-height:20px;color:#d63fd0;left:1353.3px;">2024-12-06 13:07:33</div>
<div class="t" style="top:975.5px;font-size:16px;line-height:20px;color:#1f2937;left:1526.5px;">0:14:01</div>
<div class="r" style="left:530px;top:1044px;width:1068px;height:1px;background:#e6e6e6;"></div>
<div class="r" style="left:566px;top:1004px;width:1px;height:40px;background:#e6e6e6;"></div>
<div class="r" style="left:622px;top:1004px;width:1px;height:40px;background:#e6e6e6;"></div>
<div class="r" style="left:669px;top:1004px;width:1px;height:40px;background:#e6e6e6;"></div>
<div class="r" style="left:870px;top:1004px;width:1px;height:40px;background:#e6e6e6;"></div>
<div class="r" style="left:927px;top:1004px;width:1px;height:40px;background:#e6e6e6;"></div>
<div class="r" style="left:1081px;top:1004px;width:1px;height:40px;background:#e6e6e6;"></div>
<div class="r" style="left:1170px;top:1004px;width:1px;height:40px;background:#e6e6e6;"></div>
<div class="r" style="left:1343px;top:1004px;width:1px;height:40px;background:#e6e6e6;"></div>
<div class="r" style="left:1517px;top:1004px;width:1px;height:40px;background:#e6e6e6;"></div>
<div class="r" style="left:1598px;top:1004px;width:1px;height:40px;background:#e6e6e6;"></div>
<svg class="r" style="left:540px;top:1015px;" width="17" height="19" viewBox="0 0 17 19"><path d="M0.1 1.3 L5.85 4.5 L0.1 7.8 Z" fill="#1f2937"/><path d="M7.2 4.5 H11.8 A3.05 3.05 0 0 1 11.8 10.6 H4.3 A2.85 2.85 0 0 0 4.3 16.3 H8.8" fill="none" stroke="#1f2937" stroke-width="2"/><rect x="11.1" y="14.2" width="4.3" height="4.4" fill="#1f2937"/></svg>
<svg class="r" style="left:580.3px;top:1016.7px;" width="14" height="14" viewBox="0 0 14 14"><rect x="0" y="0" width="13.7" height="13.7" rx="2" fill="#5b616c"/><path d="M6.85 2.4 V11.3 M2.05 6.85 H11.65" stroke="#fff" stroke-width="2.3"/></svg>
<div class="t" style="top:1015.0px;font-size:16px;line-height:20px;color:#1f2937;left:632.8px;">6</div>
<div class="t" style="top:1015.0px;font-size:16px;line-height:20px;color:#1f2937;left:679.6px;">Trip 2024-12-06 05:56:22</div>
<div class="t" style="top:1015.0px;font-size:16px;line-height:20px;color:#1f2937;left:880.4px;">5.9</div>
<svg class="r" style="left:937.7px;top:1024.2px;" width="21.3" height="1.25" viewBox="0 0 21.3 1.25"><rect x="0.00" y="0" width="3.5" height="1.25" fill="#1f2937"/><rect x="4.45" y="0" width="3.5" height="1.25" fill="#1f2937"/><rect x="8.90" y="0" width="3.5" height="1.25" fill="#1f2937"/><rect x="13.35" y="0" width="3.5" height="1.25" fill="#1f2937"/><rect x="17.80" y="0" width="3.5" height="1.25" fill="#1f2937"/></svg>
<div class="t" style="top:1015.0px;font-size:16px;line-height:20px;color:#1f2937;left:1091.9px;">111</div>
<div class="t" style="top:1015.0px;font-size:16px;line-height:20px;color:#d63fd0;left:1180.8px;">2024-12-06 05:56:22</div>
<div class="t" style="top:1015.0px;font-size:16px;line-height:20px;color:#d63fd0;left:1353.3px;">2024-12-06 07:51:08</div>
<div class="t" style="top:1015.0px;font-size:16px;line-height:20px;color:#1f2937;left:1526.5px;">1:54:46</div>
<div class="r" style="left:530px;top:1084px;width:1068px;height:1px;background:#e6e6e6;"></div>
<div class="r" style="left:566px;top:1044px;width:1px;height:40px;background:#e6e6e6;"></div>
<div class="r" style="left:622px;top:1044px;width:1px;height:40px;background:#e6e6e6;"></div>
<div class="r" style="left:669px;top:1044px;width:1px;height:40px;background:#e6e6e6;"></div>
<div class="r" style="left:870px;top:1044px;width:1px;height:40px;background:#e6e6e6;"></div>
<div class="r" style="left:927px;top:1044px;width:1px;height:40px;background:#e6e6e6;"></div>
<div class="r" style="left:1081px;top:1044px;width:1px;height:40px;background:#e6e6e6;"></div>
<div class="r" style="left:1170px;top:1044px;width:1px;height:40px;background:#e6e6e6;"></div>
<div class="r" style="left:1343px;top:1044px;width:1px;height:40px;background:#e6e6e6;"></div>
<div class="r" style="left:1517px;top:1044px;width:1px;height:40px;background:#e6e6e6;"></div>
<div class="r" style="left:1598px;top:1044px;width:1px;height:40px;background:#e6e6e6;"></div>
<svg class="r" style="left:540px;top:1054px;" width="17" height="19" viewBox="0 0 17 19"><path d="M0.1 1.3 L5.85 4.5 L0.1 7.8 Z" fill="#1f2937"/><path d="M7.2 4.5 H11.8 A3.05 3.05 0 0 1 11.8 10.6 H4.3 A2.85 2.85 0 0 0 4.3 16.3 H8.8" fill="none" stroke="#1f2937" stroke-width="2"/><rect x="11.1" y="14.2" width="4.3" height="4.4" fill="#1f2937"/></svg>
<svg class="r" style="left:580.3px;top:1055.7px;" width="14" height="14" viewBox="0 0 14 14"><rect x="0" y="0" width="13.7" height="13.7" rx="2" fill="#5b616c"/><path d="M6.85 2.4 V11.3 M2.05 6.85 H11.65" stroke="#fff" stroke-width="2.3"/></svg>
<div class="t" style="top:1054.0px;font-size:16px;line-height:20px;color:#1f2937;left:632.8px;">7</div>
<div class="t" style="top:1054.0px;font-size:16px;line-height:20px;color:#1f2937;left:679.6px;">Trip 2024-12-06 04:01:35</div>
<div class="t" style="top:1054.0px;font-size:16px;line-height:20px;color:#1f2937;left:880.4px;">8.1</div>
<svg class="r" style="left:937.7px;top:1063.2px;" width="21.3" height="1.25" viewBox="0 0 21.3 1.25"><rect x="0.00" y="0" width="3.5" height="1.25" fill="#1f2937"/><rect x="4.45" y="0" width="3.5" height="1.25" fill="#1f2937"/><rect x="8.90" y="0" width="3.5" height="1.25" fill="#1f2937"/><rect x="13.35" y="0" width="3.5" height="1.25" fill="#1f2937"/><rect x="17.80" y="0" width="3.5" height="1.25" fill="#1f2937"/></svg>
<div class="t" style="top:1054.0px;font-size:16px;line-height:20px;color:#1f2937;left:1091.9px;">35</div>
<div class="t" style="top:1054.0px;font-size:16px;line-height:20px;color:#d63fd0;left:1180.8px;">2024-12-06 04:01:35</div>
<div class="t" style="top:1054.0px;font-size:16px;line-height:20px;color:#d63fd0;left:1353.3px;">2024-12-06 05:37:11</div>
<div class="t" style="top:1054.0px;font-size:16px;line-height:20px;color:#1f2937;left:1526.5px;">1:35:36</div>
<div class="r" style="left:530px;top:1123px;width:1068px;height:1px;background:#e6e6e6;"></div>
<div class="r" style="left:566px;top:1084px;width:1px;height:39px;background:#e6e6e6;"></div>
<div class="r" style="left:622px;top:1084px;width:1px;height:39px;background:#e6e6e6;"></div>
<div class="r" style="left:669px;top:1084px;width:1px;height:39px;background:#e6e6e6;"></div>
<div class="r" style="left:870px;top:1084px;width:1px;height:39px;background:#e6e6e6;"></div>
<div class="r" style="left:927px;top:1084px;width:1px;height:39px;background:#e6e6e6;"></div>
<div class="r" style="left:1081px;top:1084px;width:1px;height:39px;background:#e6e6e6;"></div>
<div class="r" style="left:1170px;top:1084px;width:1px;height:39px;background:#e6e6e6;"></div>
<div class="r" style="left:1343px;top:1084px;width:1px;height:39px;background:#e6e6e6;"></div>
<div class="r" style="left:1517px;top:1084px;width:1px;height:39px;background:#e6e6e6;"></div>
<div class="r" style="left:1598px;top:1084px;width:1px;height:39px;background:#e6e6e6;"></div>
<svg class="r" style="left:540px;top:1094px;" width="17" height="19" viewBox="0 0 17 19"><path d="M0.1 1.3 L5.85 4.5 L0.1 7.8 Z" fill="#1f2937"/><path d="M7.2 4.5 H11.8 A3.05 3.05 0 0 1 11.8 10.6 H4.3 A2.85 2.85 0 0 0 4.3 16.3 H8.8" fill="none" stroke="#1f2937" stroke-width="2"/><rect x="11.1" y="14.2" width="4.3" height="4.4" fill="#1f2937"/></svg>
<svg class="r" style="left:580.3px;top:1095.7px;" width="14" height="14" viewBox="0 0 14 14"><rect x="0" y="0" width="13.7" height="13.7" rx="2" fill="#5b616c"/><path d="M6.85 2.4 V11.3 M2.05 6.85 H11.65" stroke="#fff" stroke-width="2.3"/></svg>
<div class="t" style="top:1094.0px;font-size:16px;line-height:20px;color:#1f2937;left:632.8px;">8</div>
<div class="t" style="top:1094.0px;font-size:16px;line-height:20px;color:#1f2937;left:679.6px;">Trip 2024-12-06 08:57:26</div>
<div class="t" style="top:1094.0px;font-size:16px;line-height:20px;color:#1f2937;left:880.4px;">8.2</div>
<svg class="r" style="left:937.7px;top:1103.2px;" width="21.3" height="1.25" viewBox="0 0 21.3 1.25"><rect x="0.00" y="0" width="3.5" height="1.25" fill="#1f2937"/><rect x="4.45" y="0" width="3.5" height="1.25" fill="#1f2937"/><rect x="8.90" y="0" width="3.5" height="1.25" fill="#1f2937"/><rect x="13.35" y="0" width="3.5" height="1.25" fill="#1f2937"/><rect x="17.80" y="0" width="3.5" height="1.25" fill="#1f2937"/></svg>
<div class="t" style="top:1094.0px;font-size:16px;line-height:20px;color:#1f2937;left:1091.9px;">32</div>
<div class="t" style="top:1094.0px;font-size:16px;line-height:20px;color:#d63fd0;left:1180.8px;">2024-12-06 08:57:26</div>
<div class="t" style="top:1094.0px;font-size:16px;line-height:20px;color:#d63fd0;left:1353.3px;">2024-12-06 10:04:49</div>
<div class="t" style="top:1094.0px;font-size:16px;line-height:20px;color:#1f2937;left:1526.5px;">1:07:23</div>
<div class="r" style="left:530px;top:1118px;width:1470px;height:31px;background:#f4f4f4;"></div>
<div class="r" style="left:530px;top:1117px;width:1470px;height:1px;background:#e6e6e6;"></div>
<div class="r" style="left:566px;top:1118px;width:1px;height:31px;background:#e6e6e6;"></div>
<div class="r" style="left:622px;top:1118px;width:1px;height:31px;background:#e6e6e6;"></div>
<div class="r" style="left:669px;top:1118px;width:1px;height:31px;background:#e6e6e6;"></div>
<div class="r" style="left:870px;top:1118px;width:1px;height:31px;background:#e6e6e6;"></div>
<div class="r" style="left:927px;top:1118px;width:1px;height:31px;background:#e6e6e6;"></div>
<div class="r" style="left:1081px;top:1118px;width:1px;height:31px;background:#e6e6e6;"></div>
<div class="r" style="left:1170px;top:1118px;width:1px;height:31px;background:#e6e6e6;"></div>
<div class="r" style="left:1343px;top:1118px;width:1px;height:31px;background:#e6e6e6;"></div>
<div class="r" style="left:1517px;top:1118px;width:1px;height:31px;background:#e6e6e6;"></div>
<div class="r" style="left:1598px;top:1118px;width:1px;height:31px;background:#e6e6e6;"></div>
<svg class="r" style="left:633.1px;top:1134.9px;" width="25.3" height="1.8" viewBox="0 0 25.3 1.8"><rect x="0.00" y="0" width="4.1" height="1.8" fill="#1f2937"/><rect x="5.30" y="0" width="4.1" height="1.8" fill="#1f2937"/><rect x="10.60" y="0" width="4.1" height="1.8" fill="#1f2937"/><rect x="15.90" y="0" width="4.1" height="1.8" fill="#1f2937"/><rect x="21.20" y="0" width="4.1" height="1.8" fill="#1f2937"/></svg>
<div class="t" style="top:1126.0px;font-size:16px;line-height:20px;color:#1f2937;left:679.6px;-webkit-text-stroke:0.45px #1f2937;letter-spacing:0.2px;">Total</div>
<div class="t" style="top:1126.0px;font-size:16px;line-height:20px;color:#1f2937;left:880.4px;-webkit-text-stroke:0.45px #1f2937;letter-spacing:0.2px;">6.6</div>
<svg class="r" style="left:937.7px;top:1134.9px;" width="25.3" height="1.8" viewBox="0 0 25.3 1.8"><rect x="0.00" y="0" width="4.1" height="1.8" fill="#1f2937"/><rect x="5.30" y="0" width="4.1" height="1.8" fill="#1f2937"/><rect x="10.60" y="0" width="4.1" height="1.8" fill="#1f2937"/><rect x="15.90" y="0" width="4.1" height="1.8" fill="#1f2937"/><rect x="21.20" y="0" width="4.1" height="1.8" fill="#1f2937"/></svg>
<div class="t" style="top:1126.0px;font-size:16px;line-height:20px;color:#1f2937;left:1091.9px;-webkit-text-stroke:0.45px #1f2937;letter-spacing:0.2px;">82</div>
<div class="t" style="top:1126.0px;font-size:16px;line-height:20px;color:#1f2937;left:1180.8px;-webkit-text-stroke:0.45px #1f2937;letter-spacing:0.2px;">2024-12-06 04:01:35</div>
<div class="t" style="top:1126.0px;font-size:16px;line-height:20px;color:#1f2937;left:1353.3px;-webkit-text-stroke:0.45px #1f2937;letter-spacing:0.2px;">2024-12-06 15:24:30</div>
<div class="t" style="top:1126.0px;font-size:16px;line-height:20px;color:#1f2937;left:1526.5px;-webkit-text-stroke:0.45px #1f2937;letter-spacing:0.2px;">6:40:13</div>
<div class="r" style="left:1995px;top:707px;width:5px;height:404px;background:#c1c1c1;border-radius:2px;"></div>
<div class="r" style="left:0px;top:1149px;width:2008px;height:1px;background:#e3e3e3;"></div>
<svg class="r" style="left:24px;top:1162px;" width="20" height="18" viewBox="0 0 20 18"><rect x="1.15" y="1.55" width="17.7" height="15.9" rx="0.8" fill="none" stroke="#2a3444" stroke-width="1.2"/><rect x="0.6" y="1" width="5.3" height="17" fill="#1f2937"/></svg>
<svg class="r" style="left:65px;top:1163.2px;" width="17" height="17" viewBox="0 0 17 17"><rect x="0" y="0.0" width="4.4" height="4.5" fill="#a5a9b0"/><rect x="0" y="5.95" width="4.4" height="4.5" fill="#a5a9b0"/><rect x="0" y="11.9" width="4.4" height="4.5" fill="#a5a9b0"/><rect x="6" y="0.0" width="4.4" height="4.5" fill="#a5a9b0"/><rect x="6" y="5.95" width="4.4" height="4.5" fill="#a5a9b0"/><rect x="6" y="11.9" width="4.4" height="4.5" fill="#a5a9b0"/><rect x="12" y="0.0" width="4.4" height="4.5" fill="#a5a9b0"/><rect x="12" y="5.95" width="4.4" height="4.5" fill="#a5a9b0"/><rect x="12" y="11.9" width="4.4" height="4.5" fill="#a5a9b0"/></svg>
<div class="t" style="top:1162.6px;font-size:16px;line-height:20px;color:#1f2937;left:582.0px;width:600px;text-align:center;">© Gurtam</div>
<svg class="r" style="left:0px;top:0px;" width="2008" height="1191" viewBox="0 0 2008 1191"><rect x="1682.5" y="1163" width="19.6" height="16.4" fill="#1f2937"/><rect x="1683.6" y="1164.1" width="17.4" height="3.9" fill="#fff"/><rect x="1687" y="1171" width="11" height="1.7" fill="#c9ccd1"/><rect x="1687" y="1175" width="6" height="1.3" fill="#fff"/><rect x="1707.4" y="1162.5" width="33.3" height="18.2" rx="9.1" fill="#f0473b"/><path d="M1760.2 1163.5 H1778.1 V1169.5 L1776.5 1171 L1778 1172.5 H1772.5 V1176.4 H1760.2 Z" fill="#a5a9b0"/><path d="M1761 1164.5 L1769.1 1171.4 L1777.2 1164.5" fill="none" stroke="#fff" stroke-width="1.4"/><path d="M1772.6 1176.6 H1777.5 M1775.5 1174 L1778.2 1176.6 L1775.5 1179.2" fill="none" stroke="#a5a9b0" stroke-width="1.6"/><path d="M1785.6 1170.6 H1780 M1782.3 1168 L1779.6 1170.6 L1782.3 1173.2" fill="none" stroke="#a5a9b0" stroke-width="1.6"/><rect x="1805" y="1163.5" width="19" height="15.9" fill="#a5a9b0"/><circle cx="1809.6" cy="1168" r="1.7" fill="#fff"/><path d="M1806.5 1177.8 L1806.5 1176.5 L1812 1172.3 L1815.2 1175.2 L1818.6 1171.8 L1822.6 1176.2 L1822.6 1177.8 Z" fill="#fff"/><rect x="1843.3" y="1165" width="10.2" height="11.9" fill="#1f2937"/><rect x="1855" y="1165" width="10.7" height="11.9" fill="#1f2937"/><rect x="1844.8" y="1167" width="5.8" height="1.2" fill="#fff"/><rect x="1844.8" y="1170.4" width="5.8" height="1.2" fill="#fff"/><rect x="1844.8" y="1173.8" width="3.6" height="1.2" fill="#fff"/></svg>
<svg class="r" style="left:0px;top:0px;" width="2008" height="1191" viewBox="0 0 2008 1191"><path d="M1724.6 1166 V1176.2" stroke="#fff" stroke-width="2"/><path d="M1724.8 1166.3 L1721.6 1168.6" stroke="#fff" stroke-width="1.7"/></svg>
<div class="t" style="top:1162.3px;font-size:16px;line-height:20px;color:#1f2937;left:1885.0px;">15:42:39 (+03)</div>
</body></html>
